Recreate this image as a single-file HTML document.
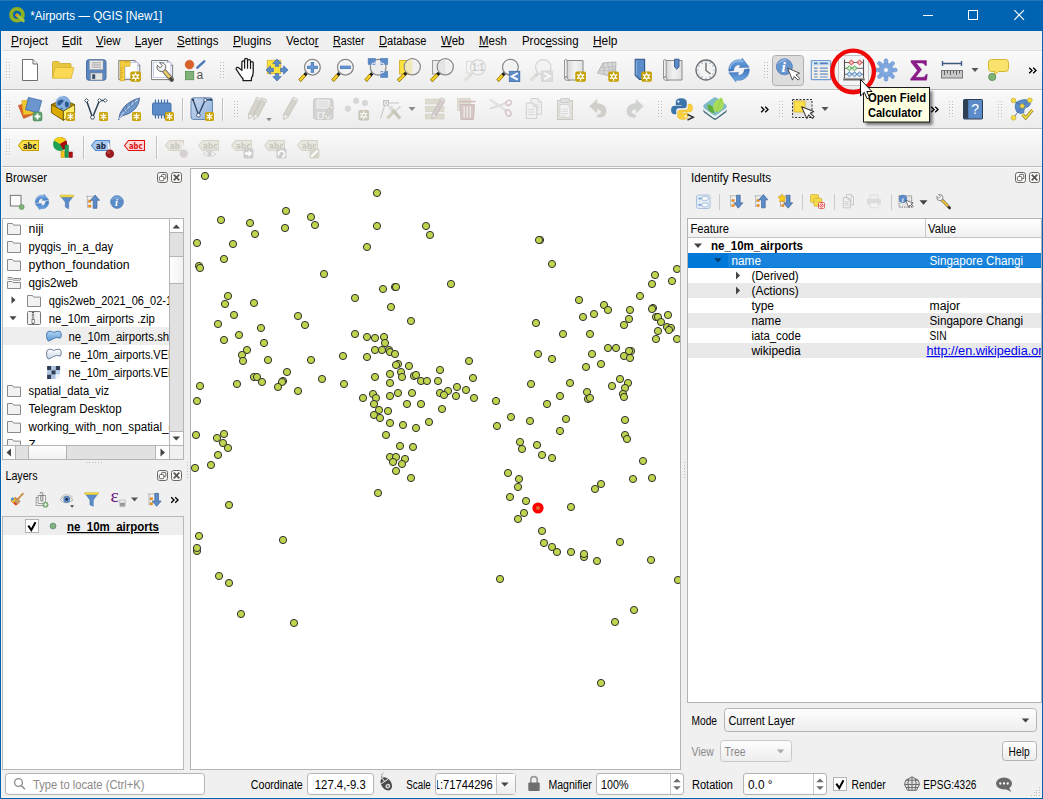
<!DOCTYPE html>
<html><head><meta charset="utf-8"><title>*Airports — QGIS [New1]</title>
<style>
html,body{margin:0;padding:0;background:#f0f0f0;overflow:hidden}
body{width:1043px;height:799px;font-family:"Liberation Sans",sans-serif}
svg{display:block;font-family:"Liberation Sans",sans-serif}
text{white-space:pre}
</style></head><body>
<svg width="1043" height="799" viewBox="0 0 1043 799">
<rect x="0" y="0" width="1043" height="799" fill="#f0f0f0" />
<rect x="0" y="0" width="1043" height="31" fill="#0063b1" />
<circle cx="17" cy="14.7" r="5.9" fill="none" stroke="#8fb023" stroke-width="3.8"/><path d="M17 15 L23.2 20.6" stroke="#a4c639" stroke-width="3.2" stroke-linecap="round"/><circle cx="16.8" cy="15" r="1.5" fill="#f58a1f"/>
<text x="30.2" y="20" font-size="12" fill="#fff" textLength="132" lengthAdjust="spacingAndGlyphs" >*Airports — QGIS [New1]</text>
<rect x="923" y="15" width="10" height="1" fill="#fff"/>
<rect x="968.5" y="10.5" width="9" height="9" fill="none" stroke="#fff" stroke-width="1" />
<rect x="0" y="0" width="1043" height="1" fill="#2474ba"/>
<path d="M1014.3 10.1 L1024 19.8 M1024 10.1 L1014.3 19.8" stroke="#fff" stroke-width="1.1" fill="none"/>
<rect x="1" y="31" width="1041" height="20" fill="#f0f0f0" />
<rect x="1" y="50" width="1041" height="1" fill="#dedede"/>
<text x="11" y="45" font-size="12" fill="#000" textLength="37" lengthAdjust="spacingAndGlyphs" ><tspan text-decoration="underline">P</tspan>roject</text>
<text x="62" y="45" font-size="12" fill="#000" textLength="20" lengthAdjust="spacingAndGlyphs" ><tspan text-decoration="underline">E</tspan>dit</text>
<text x="96" y="45" font-size="12" fill="#000" textLength="24.5" lengthAdjust="spacingAndGlyphs" ><tspan text-decoration="underline">V</tspan>iew</text>
<text x="135" y="45" font-size="12" fill="#000" textLength="28" lengthAdjust="spacingAndGlyphs" ><tspan text-decoration="underline">L</tspan>ayer</text>
<text x="177" y="45" font-size="12" fill="#000" textLength="41.5" lengthAdjust="spacingAndGlyphs" ><tspan text-decoration="underline">S</tspan>ettings</text>
<text x="233" y="45" font-size="12" fill="#000" textLength="38.5" lengthAdjust="spacingAndGlyphs" ><tspan text-decoration="underline">P</tspan>lugins</text>
<text x="286" y="45" font-size="12" fill="#000" textLength="32.5" lengthAdjust="spacingAndGlyphs" >Vecto<tspan text-decoration="underline">r</tspan></text>
<text x="333" y="45" font-size="12" fill="#000" textLength="31.5" lengthAdjust="spacingAndGlyphs" ><tspan text-decoration="underline">R</tspan>aster</text>
<text x="379" y="45" font-size="12" fill="#000" textLength="47.5" lengthAdjust="spacingAndGlyphs" ><tspan text-decoration="underline">D</tspan>atabase</text>
<text x="441" y="45" font-size="12" fill="#000" textLength="23.5" lengthAdjust="spacingAndGlyphs" ><tspan text-decoration="underline">W</tspan>eb</text>
<text x="479" y="45" font-size="12" fill="#000" textLength="28" lengthAdjust="spacingAndGlyphs" ><tspan text-decoration="underline">M</tspan>esh</text>
<text x="522" y="45" font-size="12" fill="#000" textLength="56.5" lengthAdjust="spacingAndGlyphs" >Proc<tspan text-decoration="underline">e</tspan>ssing</text>
<text x="593" y="45" font-size="12" fill="#000" textLength="24.5" lengthAdjust="spacingAndGlyphs" ><tspan text-decoration="underline">H</tspan>elp</text>
<defs><linearGradient id="tbg" x1="0" y1="0" x2="0" y2="1"><stop offset="0" stop-color="#fafafa"/><stop offset="1" stop-color="#ececec"/></linearGradient></defs>
<rect x="1" y="51" width="1041" height="38" fill="url(#tbg)"/>
<rect x="1" y="89" width="1041" height="1" fill="#bcbcbc"/>
<rect x="1" y="51" width="1041" height="1" fill="#fbfbfb"/>
<rect x="1" y="90" width="1041" height="38" fill="url(#tbg)"/>
<rect x="1" y="128" width="1041" height="1" fill="#bcbcbc"/>
<rect x="1" y="90" width="1041" height="1" fill="#ffffff"/>
<rect x="1" y="129" width="1041" height="37" fill="url(#tbg)"/>
<rect x="1" y="166" width="1041" height="1" fill="#bcbcbc"/>
<rect x="1" y="129" width="1041" height="1" fill="#ffffff"/>
<rect x="1" y="167" width="1041" height="1" fill="#fafafa"/>
<defs><linearGradient id="scr" x1="0" y1="0" x2="1" y2="0"><stop offset="0" stop-color="#d4d4d4"/><stop offset="0.5" stop-color="#f2f2f2"/><stop offset="1" stop-color="#e0e0e0"/></linearGradient><linearGradient id="vl" x1="0" y1="0" x2="1" y2="1"><stop offset="0" stop-color="#c9d8ee"/><stop offset="1" stop-color="#8fb0db"/></linearGradient></defs>
<rect x="6" y="62" width="1" height="1" fill="#bcbcbc"/><rect x="9" y="62" width="1" height="1" fill="#bcbcbc"/><rect x="7" y="63" width="1" height="1" fill="#fff" opacity="0.7"/><rect x="10" y="63" width="1" height="1" fill="#fff" opacity="0.7"/><rect x="6" y="65" width="1" height="1" fill="#bcbcbc"/><rect x="9" y="65" width="1" height="1" fill="#bcbcbc"/><rect x="7" y="66" width="1" height="1" fill="#fff" opacity="0.7"/><rect x="10" y="66" width="1" height="1" fill="#fff" opacity="0.7"/><rect x="6" y="68" width="1" height="1" fill="#bcbcbc"/><rect x="9" y="68" width="1" height="1" fill="#bcbcbc"/><rect x="7" y="69" width="1" height="1" fill="#fff" opacity="0.7"/><rect x="10" y="69" width="1" height="1" fill="#fff" opacity="0.7"/><rect x="6" y="71" width="1" height="1" fill="#bcbcbc"/><rect x="9" y="71" width="1" height="1" fill="#bcbcbc"/><rect x="7" y="72" width="1" height="1" fill="#fff" opacity="0.7"/><rect x="10" y="72" width="1" height="1" fill="#fff" opacity="0.7"/><rect x="6" y="74" width="1" height="1" fill="#bcbcbc"/><rect x="9" y="74" width="1" height="1" fill="#bcbcbc"/><rect x="7" y="75" width="1" height="1" fill="#fff" opacity="0.7"/><rect x="10" y="75" width="1" height="1" fill="#fff" opacity="0.7"/><rect x="6" y="77" width="1" height="1" fill="#bcbcbc"/><rect x="9" y="77" width="1" height="1" fill="#bcbcbc"/><rect x="7" y="78" width="1" height="1" fill="#fff" opacity="0.7"/><rect x="10" y="78" width="1" height="1" fill="#fff" opacity="0.7"/>
<g transform="translate(18.0 58.0)"><path d="M4.5 1.5 H15 L19.5 6 V22.5 H4.5 Z" fill="#fff" stroke="#6e6e6e"/><path d="M15 1.5 V6 H19.5" fill="#eee" stroke="#6e6e6e"/></g>
<g transform="translate(51.0 58.0)"><path d="M1.5 4.5 Q1.5 3.5 2.5 3.5 H7.5 L9.5 5.5 H19 Q20 5.5 20 6.5 V19.5 H1.5 Z" fill="#e9c63f" stroke="#c9a62a" stroke-width="0.8"/><path d="M4.2 9.5 H22.8 L20.2 20.3 H1.6 Z" fill="#fcd954" stroke="#d9b534" stroke-width="0.8"/></g>
<g transform="translate(84.0 58.0)"><rect x="2.5" y="1.7" width="19.5" height="20.5" rx="2.3" fill="#5b86c0" stroke="#4a72a8"/><rect x="5.5" y="2.5" width="13.5" height="9" fill="#efefef" stroke="#9a9a9a" stroke-width="0.6"/><path d="M7.5 4.8 H17 M7.5 7 H17 M7.5 9.2 H17" stroke="#777" stroke-width="0.7"/><rect x="6.5" y="15" width="12" height="7" fill="#e4e4e4" stroke="#888" stroke-width="0.5"/><rect x="8.2" y="16.3" width="3" height="4.6" fill="#3a506e"/></g>
<g transform="translate(117.0 58.0)"><path d="M1.8 2.5 H18 L22.8 7.3 V21.6 H1.8 Z" fill="#fff" stroke="#7a7a7a"/><path d="M18 2.5 V7.3 H22.8" fill="#f0f0f0" stroke="#7a7a7a"/><rect x="8" y="4.5" width="12.8" height="15.5" fill="#fff" stroke="#b4c4ea" stroke-width="0.8"/><path d="M3.2 2.9 H13 V8.2 H7.5 V22.7 H3.2 Z" fill="#f5cf3e" stroke="#d4a92a" stroke-width="0.8"/><path d="M3.6 10 h2 M3.6 12.3 h1.3 M3.6 14.6 h2 M3.6 16.9 h1.3 M3.6 19.2 h2 M8.5 3.3 v1.6 M10.8 3.3 v1.2" stroke="#b38d14" stroke-width="0.7"/><rect x="13.3" y="13.4" width="10.6" height="10.4" rx="1.8" fill="#c4a000"/><g stroke="#fff" stroke-width="1.4" stroke-linecap="round"><path d="M18.6 15 V22.2 M15.5 16.8 L21.7 20.4 M21.7 16.8 L15.5 20.4"/></g><circle cx="18.6" cy="18.6" r="1.9" fill="#c4a000" stroke="#fff" stroke-width="1.2"/></g>
<g transform="translate(150.0 58.0)"><path d="M1.6 2.5 H17.8 L22.6 7.3 V21.6 H1.6 Z" fill="#fff" stroke="#7a7a7a"/><path d="M17.8 2.5 V7.3 H22.6" fill="#f0f0f0" stroke="#7a7a7a"/><rect x="3.4" y="4.3" width="17.4" height="15.3" fill="#fff" stroke="#b4c4ea" stroke-width="0.8"/><path d="M14.6 13.6 L21.6 21.6" stroke="#5a5a5a" stroke-width="4.6" stroke-linecap="round"/><path d="M14.6 13.6 L21.6 21.6" stroke="#e9c96e" stroke-width="3" stroke-linecap="round"/><path d="M20.6 20.5 L21.9 21.9" stroke="#444" stroke-width="3" stroke-linecap="round"/><circle cx="11.4" cy="9.1" r="4.4" fill="#f2f2f2" stroke="#555" stroke-width="0.9"/><path d="M11.2 8.9 L7.2 4.9" stroke="#fff" stroke-width="3.4"/><path d="M12.3 7.6 L9.2 4.5 M10 9.9 L6.9 6.8" stroke="#555" stroke-width="0.9"/><path d="M12.3 7.6 L10 9.9" stroke="#555" stroke-width="0.9"/></g>
<g transform="translate(183.0 58.0)"><circle cx="6.5" cy="6.6" r="4.4" fill="#d9622b" stroke="#c05520" stroke-width="0.5"/><path d="M14.4 9.6 L21.2 3.4" stroke="#4f7ab8" stroke-width="2.6" stroke-linecap="round"/><rect x="2.5" y="13.5" width="8.2" height="8.2" fill="#7fb37a" stroke="#5f9458" stroke-width="0.9"/><text x="13.6" y="20.7" font-size="12" fill="#555">a</text></g>
<rect x="220" y="62" width="1" height="1" fill="#bcbcbc"/><rect x="223" y="62" width="1" height="1" fill="#bcbcbc"/><rect x="221" y="63" width="1" height="1" fill="#fff" opacity="0.7"/><rect x="224" y="63" width="1" height="1" fill="#fff" opacity="0.7"/><rect x="220" y="65" width="1" height="1" fill="#bcbcbc"/><rect x="223" y="65" width="1" height="1" fill="#bcbcbc"/><rect x="221" y="66" width="1" height="1" fill="#fff" opacity="0.7"/><rect x="224" y="66" width="1" height="1" fill="#fff" opacity="0.7"/><rect x="220" y="68" width="1" height="1" fill="#bcbcbc"/><rect x="223" y="68" width="1" height="1" fill="#bcbcbc"/><rect x="221" y="69" width="1" height="1" fill="#fff" opacity="0.7"/><rect x="224" y="69" width="1" height="1" fill="#fff" opacity="0.7"/><rect x="220" y="71" width="1" height="1" fill="#bcbcbc"/><rect x="223" y="71" width="1" height="1" fill="#bcbcbc"/><rect x="221" y="72" width="1" height="1" fill="#fff" opacity="0.7"/><rect x="224" y="72" width="1" height="1" fill="#fff" opacity="0.7"/><rect x="220" y="74" width="1" height="1" fill="#bcbcbc"/><rect x="223" y="74" width="1" height="1" fill="#bcbcbc"/><rect x="221" y="75" width="1" height="1" fill="#fff" opacity="0.7"/><rect x="224" y="75" width="1" height="1" fill="#fff" opacity="0.7"/><rect x="220" y="77" width="1" height="1" fill="#bcbcbc"/><rect x="223" y="77" width="1" height="1" fill="#bcbcbc"/><rect x="221" y="78" width="1" height="1" fill="#fff" opacity="0.7"/><rect x="224" y="78" width="1" height="1" fill="#fff" opacity="0.7"/>
<g transform="translate(232.0 58.0)"><g transform="translate(1.23 -1.61) scale(1.136 1.085)"><path d="M7.6 12.9 V5.6 Q7.6 4.2 8.8 4.2 Q10 4.2 10 5.6 V3.3 Q10 1.9 11.3 1.9 Q12.6 1.9 12.6 3.3 V4.3 Q12.6 3 13.9 3 Q15.2 3 15.2 4.4 V6 Q15.2 4.9 16.4 4.9 Q17.6 4.9 17.6 6.2 V14.5 Q17.6 18 16 20 V22.3 H8.6 V20.6 Q6.5 18.3 4.4 14.6 Q3.2 12.6 2.6 11.7 Q2.2 10.6 3.2 10.2 Q4.3 9.9 5.3 10.9 Z" fill="#fff" stroke="#1a1a1a" stroke-width="1.15" stroke-linejoin="round"/><path d="M10 5.6 V11.5 M12.6 4.3 V11.3 M15.2 6 V11.6" stroke="#1a1a1a" stroke-width="1.05" fill="none"/></g></g>
<g transform="translate(265.0 58.0)"><rect x="2.3" y="2.3" width="13.4" height="13.4" fill="#fbe23c" stroke="#d9b534" stroke-width="0.9"/><g fill="#5b8cc9" stroke="#3f6ea8" stroke-width="0.7" stroke-linejoin="round"><path d="M12 1 L16.2 5.4 H13.7 V8.4 H10.3 V5.4 H7.8 Z"/><path d="M12 23 L16.2 18.6 H13.7 V15.6 H10.3 V18.6 H7.8 Z"/><path d="M1 12 L5.4 7.8 V10.3 H8.4 V13.7 H5.4 V16.2 Z"/><path d="M23 12 L18.6 7.8 V10.3 H15.6 V13.7 H18.6 V16.2 Z"/></g></g>
<g transform="translate(298.0 58.0)"><g opacity="1"><path d="M8.46 15.14 L1.7 22.7" stroke="#1a1a1a" stroke-width="3.2" stroke-linecap="butt"/><path d="M6.56 17.04 L1.7 22.7" stroke="#b89400" stroke-width="3.4"/><path d="M6.36 17.24 L2.0 22.4" stroke="#f7cf2e" stroke-width="2.1"/><circle cx="14.4" cy="9.2" r="7.9" fill="#f2f2f2" stroke="#858585" stroke-width="1.2"/><path d="M8.10 8.20 A6.40 6.40 0 0 1 20.70 8.20" stroke="#fff" stroke-width="1" fill="none" opacity="0.7"/><path d="M14.4 4 V14.7 M9 9.35 H19.8" stroke="#4a78b5" stroke-width="3.3"/><path d="M14.4 4.6 V14.1 M9.6 9.35 H19.2" stroke="#6596d2" stroke-width="2.1"/></g></g>
<g transform="translate(331.0 58.0)"><g opacity="1"><path d="M8.46 15.14 L1.7 22.7" stroke="#1a1a1a" stroke-width="3.2" stroke-linecap="butt"/><path d="M6.56 17.04 L1.7 22.7" stroke="#b89400" stroke-width="3.4"/><path d="M6.36 17.24 L2.0 22.4" stroke="#f7cf2e" stroke-width="2.1"/><circle cx="14.4" cy="9.2" r="7.9" fill="#f2f2f2" stroke="#858585" stroke-width="1.2"/><path d="M8.10 8.20 A6.40 6.40 0 0 1 20.70 8.20" stroke="#fff" stroke-width="1" fill="none" opacity="0.7"/><path d="M9 9.35 H19.8" stroke="#4a78b5" stroke-width="3.3"/><path d="M9.6 9.35 H19.2" stroke="#6596d2" stroke-width="2.1"/></g></g>
<g transform="translate(364.0 58.0)"><g opacity="1"><path d="M8.26 15.24 L1.7 22.7" stroke="#1a1a1a" stroke-width="3.2" stroke-linecap="butt"/><path d="M6.36 17.14 L1.7 22.7" stroke="#b89400" stroke-width="3.4"/><path d="M6.16 17.34 L2.0 22.4" stroke="#f7cf2e" stroke-width="2.1"/><circle cx="14.2" cy="9.3" r="7.9" fill="#ececec" stroke="#858585" stroke-width="1.2"/><path d="M7.90 8.30 A6.40 6.40 0 0 1 20.50 8.30" stroke="#fff" stroke-width="1" fill="none" opacity="0.7"/><g transform="translate(4.1 0.3) rotate(0 3.6 3.1)"><rect x="0" y="0" width="7.2" height="6.2" fill="#5b8cc9" stroke="#4a78b5" stroke-width="0.5"/><path d="M7.4 2.6 L4.4 6.4 L7.4 6.4 Z M2.8 6.4 L4.6 4.2 L7.4 6.4 Z" fill="#ececec"/></g><g transform="translate(27.9 0) scale(-1 1)"><g transform="translate(4.1 0.3) rotate(0 3.6 3.1)"><rect x="0" y="0" width="7.2" height="6.2" fill="#5b8cc9" stroke="#4a78b5" stroke-width="0.5"/><path d="M7.4 2.6 L4.4 6.4 L7.4 6.4 Z M2.8 6.4 L4.6 4.2 L7.4 6.4 Z" fill="#ececec"/></g></g><g transform="translate(27.9 19.8) scale(-1 -1)"><g transform="translate(4.1 0.3) rotate(0 3.6 3.1)"><rect x="0" y="0" width="7.2" height="6.2" fill="#5b8cc9" stroke="#4a78b5" stroke-width="0.5"/><path d="M7.4 2.6 L4.4 6.4 L7.4 6.4 Z M2.8 6.4 L4.6 4.2 L7.4 6.4 Z" fill="#ececec"/></g></g></g></g>
<g transform="translate(397.0 58.0)"><rect x="2.5" y="2.5" width="9.5" height="13.5" fill="#fbe23c" stroke="#d9b534"/><g opacity="1"><path d="M9.22 14.88 L1.2 22.8" stroke="#1a1a1a" stroke-width="3.2" stroke-linecap="butt"/><path d="M7.32 16.78 L1.2 22.8" stroke="#b89400" stroke-width="3.4"/><path d="M7.12 16.98 L1.5 22.5" stroke="#f7cf2e" stroke-width="2.1"/><circle cx="15.3" cy="8.8" r="8.1" fill="#f0f0f0" stroke="#858585" stroke-width="1.2"/><path d="M8.80 7.80 A6.60 6.60 0 0 1 21.80 7.80" stroke="#fff" stroke-width="1" fill="none" opacity="0.7"/><path d="M15.3 1.3 A7.5 7.5 0 0 0 15.3 16.3 Z" fill="#efe7b4" opacity="0.9"/></g></g>
<g transform="translate(430.0 58.0)"><rect x="2.5" y="2.5" width="9.5" height="13.5" fill="#ececec" stroke="#9a9a9a"/><g opacity="1"><path d="M9.22 14.88 L1.2 22.8" stroke="#1a1a1a" stroke-width="3.2" stroke-linecap="butt"/><path d="M7.32 16.78 L1.2 22.8" stroke="#b89400" stroke-width="3.4"/><path d="M7.12 16.98 L1.5 22.5" stroke="#f7cf2e" stroke-width="2.1"/><circle cx="15.3" cy="8.8" r="8.1" fill="#f0f0f0" stroke="#858585" stroke-width="1.2"/><path d="M8.80 7.80 A6.60 6.60 0 0 1 21.80 7.80" stroke="#fff" stroke-width="1" fill="none" opacity="0.7"/><path d="M15.3 1.3 A7.5 7.5 0 0 0 15.3 16.3 Z" fill="#e2e2e2" opacity="0.85"/></g></g>
<g transform="translate(463.0 58.0)"><g opacity="0.55"><rect x="3.5" y="3.5" width="9" height="11.5" fill="#f4f4f4" stroke="#c6c6c6"/><path d="M8.6 15.9 L2 22.4" stroke="#c9c9c9" stroke-width="3.2"/><path d="M6.6 17.9 L2.3 22.1" stroke="#dcdccf" stroke-width="2.4"/><circle cx="15" cy="9.3" r="7.5" fill="#f3f3f3" stroke="#bdbdbd" stroke-width="1.2"/></g><text x="9.3" y="13.4" font-size="11" font-weight="bold" fill="#c6c6c6" textLength="11.6" lengthAdjust="spacingAndGlyphs">1:1</text></g>
<g transform="translate(496.0 58.0)"><g opacity="1"><path d="M8.46 15.14 L1.7 22.7" stroke="#1a1a1a" stroke-width="3.2" stroke-linecap="butt"/><path d="M6.56 17.04 L1.7 22.7" stroke="#b89400" stroke-width="3.4"/><path d="M6.36 17.24 L2.0 22.4" stroke="#f7cf2e" stroke-width="2.1"/><circle cx="14.4" cy="9.2" r="7.9" fill="#f2f2f2" stroke="#858585" stroke-width="1.2"/><path d="M8.10 8.20 A6.40 6.40 0 0 1 20.70 8.20" stroke="#fff" stroke-width="1" fill="none" opacity="0.7"/></g><rect x="13.3" y="13.3" width="10.5" height="10.3" fill="#5b8cc9" stroke="#3f6ea8" stroke-width="0.8"/><path d="M21.8 15.2 L15.6 18.4 L21.8 21.6" stroke="#fff" stroke-width="1.9" fill="none"/></g>
<g transform="translate(529.0 58.0)"><g opacity="0.6"><path d="M8.6 15.9 L2 22.4" stroke="#bdbdbd" stroke-width="3.2"/><path d="M6.6 17.9 L2.3 22.1" stroke="#dcdccf" stroke-width="2.4"/><circle cx="14.3" cy="9.3" r="7.7" fill="#f3f3f3" stroke="#bdbdbd" stroke-width="1.2"/><rect x="12.5" y="13" width="10.8" height="10.4" fill="#cfcfcf" stroke="#bdbdbd" stroke-width="0.8"/><path d="M15 15 L21 18.2 L15 21.4" stroke="#fff" stroke-width="1.9" fill="none"/></g></g>
<g transform="translate(562.0 58.0)"><path d="M4.5 2.5 H21 V22 H7.5 Q4.5 22 4.5 19 Z" fill="url(#scr)" stroke="#8a8a8a"/><path d="M2.5 3 Q2.5 1.5 3.8 1.5 Q5.2 1.5 5.2 3 V18.5 Q3 18.2 2.5 20.5 Z" fill="#f0f0f0" stroke="#8a8a8a" stroke-width="0.9"/><path d="M2.5 20.5 Q2.8 22.5 5.5 22.5 H7.5 Q5 21.5 5.2 18.6 Q3 18.3 2.5 20.5 Z" fill="#dcdcdc" stroke="#8a8a8a" stroke-width="0.8"/><rect x="13.3" y="13.4" width="10.6" height="10.4" rx="1.8" fill="#c4a000"/><g stroke="#fff" stroke-width="1.4" stroke-linecap="round"><path d="M18.6 15 V22.2 M15.5 16.8 L21.7 20.4 M21.7 16.8 L15.5 20.4"/></g><circle cx="18.6" cy="18.6" r="1.9" fill="#c4a000" stroke="#fff" stroke-width="1.2"/></g>
<g transform="translate(595.0 58.0)"><path d="M8 5 L21 4 L20.5 13.5 L15 18 L2.5 15 Z" fill="#d8d8d8" stroke="#a9a9a9" stroke-width="0.8"/><path d="M8 5 Q10 10 9 16.5 M12.5 4.7 Q14.5 10 14 17.5 M17 4.3 Q18 9 18 15.6 M5.5 10 Q13 9 20.8 8.5 M4 12.8 Q12 13 20.6 11.5" stroke="#b5b5b5" stroke-width="0.7" fill="none"/><rect x="13.3" y="13.4" width="10.6" height="10.4" rx="1.8" fill="#c4a000"/><g stroke="#fff" stroke-width="1.4" stroke-linecap="round"><path d="M18.6 15 V22.2 M15.5 16.8 L21.7 20.4 M21.7 16.8 L15.5 20.4"/></g><circle cx="18.6" cy="18.6" r="1.9" fill="#c4a000" stroke="#fff" stroke-width="1.2"/></g>
<g transform="translate(628.0 58.0)"><path d="M7.2 1.3 H16.6 V21.5 H11.7 L7.2 17.3 Z" fill="#5b8cc9" stroke="#2f5588" stroke-width="1.1" stroke-linejoin="round"/><path d="M8.4 2.4 V16.8" stroke="#8fb4e2" stroke-width="1"/><rect x="13.3" y="13.4" width="10.6" height="10.4" rx="1.8" fill="#c4a000"/><g stroke="#fff" stroke-width="1.4" stroke-linecap="round"><path d="M18.6 15 V22.2 M15.5 16.8 L21.7 20.4 M21.7 16.8 L15.5 20.4"/></g><circle cx="18.6" cy="18.6" r="1.9" fill="#c4a000" stroke="#fff" stroke-width="1.2"/></g>
<g transform="translate(661.0 58.0)"><path d="M4.5 2.5 H21 V22 H7.5 Q4.5 22 4.5 19 Z" fill="url(#scr)" stroke="#8a8a8a"/><path d="M2.5 3 Q2.5 1.5 3.8 1.5 Q5.2 1.5 5.2 3 V18.5 Q3 18.2 2.5 20.5 Z" fill="#f0f0f0" stroke="#8a8a8a" stroke-width="0.9"/><path d="M2.5 20.5 Q2.8 22.5 5.5 22.5 H7.5 Q5 21.5 5.2 18.6 Q3 18.3 2.5 20.5 Z" fill="#dcdcdc" stroke="#8a8a8a" stroke-width="0.8"/><path d="M13.5 1.2 H18 V9 L15.75 11.2 L13.5 9 Z" fill="#5b8cc9" stroke="#2f5588" stroke-width="0.9"/></g>
<g transform="translate(694.0 58.0)"><circle cx="12" cy="12" r="10" fill="#f3f3f3" stroke="#6e6e6e" stroke-width="1.3"/><circle cx="12.00" cy="4.00" r="0.6" fill="#4f7ab8"/><circle cx="16.00" cy="5.07" r="0.6" fill="#4f7ab8"/><circle cx="18.93" cy="8.00" r="0.6" fill="#4f7ab8"/><circle cx="20.00" cy="12.00" r="0.6" fill="#4f7ab8"/><circle cx="18.93" cy="16.00" r="0.6" fill="#4f7ab8"/><circle cx="16.00" cy="18.93" r="0.6" fill="#4f7ab8"/><circle cx="12.00" cy="20.00" r="0.6" fill="#4f7ab8"/><circle cx="8.00" cy="18.93" r="0.6" fill="#4f7ab8"/><circle cx="5.07" cy="16.00" r="0.6" fill="#4f7ab8"/><circle cx="4.00" cy="12.00" r="0.6" fill="#4f7ab8"/><circle cx="5.07" cy="8.00" r="0.6" fill="#4f7ab8"/><circle cx="8.00" cy="5.07" r="0.6" fill="#4f7ab8"/><path d="M12 5 V12.5 L16.5 16" stroke="#6e6e6e" stroke-width="1.4" fill="none"/></g>
<g transform="translate(727.0 58.0)"><defs><linearGradient id="rfg" x1="0" y1="0" x2="0" y2="1"><stop offset="0" stop-color="#74abe8"/><stop offset="1" stop-color="#3a74bd"/></linearGradient></defs><path d="M1.8 13.2 A10.3 10.3 0 0 1 14.67 2.05 L15.18 0.12 L22.2 9.2 L12.4 9.6 L13.37 6.88 A5.3 5.3 0 0 0 6.75 12.6 Z" fill="url(#rfg)" stroke="#3a6fb0" stroke-width="0.5" stroke-linejoin="round"/><path d="M1.8 13.2 A10.3 10.3 0 0 1 14.67 2.05 L15.18 0.12 L22.2 9.2 L12.4 9.6 L13.37 6.88 A5.3 5.3 0 0 0 6.75 12.6 Z" fill="url(#rfg)" stroke="#3a6fb0" stroke-width="0.5" stroke-linejoin="round" transform="rotate(180 12 12)"/><path d="M2.8 11 A9.3 9.3 0 0 1 16 3.7" stroke="#b4d4f4" stroke-width="0.9" fill="none"/></g>
<rect x="764" y="62" width="1" height="1" fill="#bcbcbc"/><rect x="767" y="62" width="1" height="1" fill="#bcbcbc"/><rect x="765" y="63" width="1" height="1" fill="#fff" opacity="0.7"/><rect x="768" y="63" width="1" height="1" fill="#fff" opacity="0.7"/><rect x="764" y="65" width="1" height="1" fill="#bcbcbc"/><rect x="767" y="65" width="1" height="1" fill="#bcbcbc"/><rect x="765" y="66" width="1" height="1" fill="#fff" opacity="0.7"/><rect x="768" y="66" width="1" height="1" fill="#fff" opacity="0.7"/><rect x="764" y="68" width="1" height="1" fill="#bcbcbc"/><rect x="767" y="68" width="1" height="1" fill="#bcbcbc"/><rect x="765" y="69" width="1" height="1" fill="#fff" opacity="0.7"/><rect x="768" y="69" width="1" height="1" fill="#fff" opacity="0.7"/><rect x="764" y="71" width="1" height="1" fill="#bcbcbc"/><rect x="767" y="71" width="1" height="1" fill="#bcbcbc"/><rect x="765" y="72" width="1" height="1" fill="#fff" opacity="0.7"/><rect x="768" y="72" width="1" height="1" fill="#fff" opacity="0.7"/><rect x="764" y="74" width="1" height="1" fill="#bcbcbc"/><rect x="767" y="74" width="1" height="1" fill="#bcbcbc"/><rect x="765" y="75" width="1" height="1" fill="#fff" opacity="0.7"/><rect x="768" y="75" width="1" height="1" fill="#fff" opacity="0.7"/><rect x="764" y="77" width="1" height="1" fill="#bcbcbc"/><rect x="767" y="77" width="1" height="1" fill="#bcbcbc"/><rect x="765" y="78" width="1" height="1" fill="#fff" opacity="0.7"/><rect x="768" y="78" width="1" height="1" fill="#fff" opacity="0.7"/>
<rect x="772.5" y="55.5" width="31" height="30" fill="#dddddd" stroke="#b0b0b0" stroke-width="1" rx="3" />
<g transform="translate(775.0 58.0)"><circle cx="9.4" cy="8.8" r="8" fill="#6895cf" stroke="#4f7fb8" stroke-width="0.8"/><path d="M2.6 6.6 A7.2 7.2 0 0 1 13 2.2 Q6 3 2.6 6.6 Z" fill="#a9c6ea" opacity="0.7"/><text x="6.4" y="14.4" font-size="15.5" font-weight="bold" font-style="italic" font-family="Liberation Serif,serif" fill="#fff">i</text><g transform="translate(12.6 10.1) scale(0.98)"><path d="M0 0 L0 13.2 L3.1 10.4 L5.4 15.4 L7.6 14.4 L5.3 9.6 L9.4 9.4 Z" fill="#fff" stroke="#444" stroke-width="0.85" stroke-linejoin="round" transform="rotate(-22)"/></g></g>
<g transform="translate(808.0 58.0)"><rect x="3.3" y="2.5" width="19.4" height="19.2" rx="1" fill="#f6f0e8" stroke="#6f9bd1" stroke-width="1.2"/><rect x="3.9" y="3.1" width="18.2" height="4.6" fill="#cfe2f3"/><path d="M6 5.4 H9.6 M11.8 5.4 H19.8" stroke="#4f7fc0" stroke-width="1.9"/><path d="M6 10.2 H9.6 M11.8 10.2 H19.8" stroke="#5b8cc9" stroke-width="1.2"/><path d="M6 13.1 H9.6 M11.8 13.1 H19.8" stroke="#5b8cc9" stroke-width="1.2"/><path d="M6 16.1 H9.6 M11.8 16.1 H19.8" stroke="#5b8cc9" stroke-width="1.2"/><path d="M6 19 H9.6 M11.8 19 H19.8" stroke="#5b8cc9" stroke-width="1.2"/></g>
<rect x="838.5" y="55.5" width="30" height="30" fill="#f6f6f6" stroke="#c4c4c4" stroke-width="1" rx="2.5" />
<g transform="translate(841.0 58.0)"><path d="M3.5 1.5 V20.5 M22.5 1.5 V20.5" stroke="#555" stroke-width="1.1"/><path d="M2.3 21.5 H23.7" stroke="#6a6a6a" stroke-width="2"/><path d="M2.3 20.3 H23.7" stroke="#9a9a9a" stroke-width="0.6"/><path d="M3.5 4.5 H22.5" stroke="#555" stroke-width="0.9"/><path d="M7.7 4.5 L10.4 2.0 L13.100000000000001 4.5 L10.4 7.0 Z" fill="#ec8a8a" stroke="#c23a3a" stroke-width="0.8"/><circle cx="10.4" cy="4.5" r="0.9" fill="#fff" opacity="0.8"/><path d="M15.900000000000002 4.5 L18.6 2.0 L21.3 4.5 L18.6 7.0 Z" fill="#ec8a8a" stroke="#c23a3a" stroke-width="0.8"/><circle cx="18.6" cy="4.5" r="0.9" fill="#fff" opacity="0.8"/><path d="M3.5 10.3 H22.5" stroke="#555" stroke-width="0.9"/><path d="M5.6000000000000005 10.3 L8.3 7.800000000000001 L11.0 10.3 L8.3 12.8 Z" fill="#9fd69f" stroke="#55a555" stroke-width="0.8"/><circle cx="8.3" cy="10.3" r="0.9" fill="#fff" opacity="0.8"/><path d="M10.8 10.3 L13.5 7.800000000000001 L16.2 10.3 L13.5 12.8 Z" fill="#9fd69f" stroke="#55a555" stroke-width="0.8"/><circle cx="13.5" cy="10.3" r="0.9" fill="#fff" opacity="0.8"/><path d="M3.5 16.3 H22.5" stroke="#555" stroke-width="0.9"/><path d="M5.7 16.3 L8.4 13.8 L11.100000000000001 16.3 L8.4 18.8 Z" fill="#9cc0e6" stroke="#4f7fb8" stroke-width="0.8"/><circle cx="8.4" cy="16.3" r="0.9" fill="#fff" opacity="0.8"/><path d="M10.8 16.3 L13.5 13.8 L16.2 16.3 L13.5 18.8 Z" fill="#9cc0e6" stroke="#4f7fb8" stroke-width="0.8"/><circle cx="13.5" cy="16.3" r="0.9" fill="#fff" opacity="0.8"/><path d="M15.8 16.3 L18.5 13.8 L21.2 16.3 L18.5 18.8 Z" fill="#9cc0e6" stroke="#4f7fb8" stroke-width="0.8"/><circle cx="18.5" cy="16.3" r="0.9" fill="#fff" opacity="0.8"/></g>
<g transform="translate(874.0 58.0)"><g fill="#7fa8de" stroke="#5f8fcf" stroke-width="0.6"><rect x="10.2" y="0.8" width="3.6" height="7.5" rx="1.8" transform="rotate(0 12 12)"/><rect x="10.2" y="0.8" width="3.6" height="7.5" rx="1.8" transform="rotate(45 12 12)"/><rect x="10.2" y="0.8" width="3.6" height="7.5" rx="1.8" transform="rotate(90 12 12)"/><rect x="10.2" y="0.8" width="3.6" height="7.5" rx="1.8" transform="rotate(135 12 12)"/><rect x="10.2" y="0.8" width="3.6" height="7.5" rx="1.8" transform="rotate(180 12 12)"/><rect x="10.2" y="0.8" width="3.6" height="7.5" rx="1.8" transform="rotate(225 12 12)"/><rect x="10.2" y="0.8" width="3.6" height="7.5" rx="1.8" transform="rotate(270 12 12)"/><rect x="10.2" y="0.8" width="3.6" height="7.5" rx="1.8" transform="rotate(315 12 12)"/><circle cx="12" cy="12" r="6.8"/></g><circle cx="12" cy="12" r="6.5" fill="#7fa8de"/><circle cx="12" cy="12" r="2.5" fill="#f6f6f6" stroke="#5f8fcf" stroke-width="0.6"/></g>
<g transform="translate(907.0 58.0)"><path d="M4 2.5 H19.5 V7.5 H18 Q17.6 5 15 5 H9.2 L14.6 11.6 L8.6 19.3 H15.6 Q18.2 19.3 18.9 16.4 H20.4 L19.6 22.2 H3.6 V21 L10.4 12.4 L4 4.2 Z" fill="#8b1a8b" stroke="#7a127a" stroke-width="0.4"/></g>
<g transform="translate(940.0 58.0)"><path d="M2.5 5.5 H21.5 M2.5 3 V8 M21.5 3 V8" stroke="#3d5a80" stroke-width="1.4" fill="none"/><rect x="1.5" y="12.5" width="21" height="7.5" fill="#c9c9c9" stroke="#777" stroke-width="1"/><path d="M4.5 13 V17" stroke="#555" stroke-width="0.9"/><path d="M7.5 13 V15.5" stroke="#555" stroke-width="0.9"/><path d="M10.5 13 V17" stroke="#555" stroke-width="0.9"/><path d="M13.5 13 V15.5" stroke="#555" stroke-width="0.9"/><path d="M16.5 13 V17" stroke="#555" stroke-width="0.9"/><path d="M19.5 13 V15.5" stroke="#555" stroke-width="0.9"/></g>
<path d="M971.5 68.0 L978.5 68.0 L975 72.0 Z" fill="#555"/>
<g transform="translate(986.0 58.0)"><path d="M5.5 1.5 H19.5 Q22.5 1.5 22.5 4.5 V10.5 Q22.5 13.5 19.5 13.5 H12.5 L7.5 18 L9 13.5 H5.5 Q2.5 13.5 2.5 10.5 V4.5 Q2.5 1.5 5.5 1.5 Z" fill="#f9e36c" stroke="#d4b630" stroke-width="1"/><circle cx="6.2" cy="19" r="3.6" fill="#7fb37a" stroke="#5f9458" stroke-width="0.9"/></g>
<path d="M1029.2 67.8 l2.8 2.7 l-2.8 2.7 M1033.2 67.8 l2.8 2.7 l-2.8 2.7" stroke="#000" stroke-width="1.35" fill="none"/>
<rect x="6" y="101" width="1" height="1" fill="#bcbcbc"/><rect x="9" y="101" width="1" height="1" fill="#bcbcbc"/><rect x="7" y="102" width="1" height="1" fill="#fff" opacity="0.7"/><rect x="10" y="102" width="1" height="1" fill="#fff" opacity="0.7"/><rect x="6" y="104" width="1" height="1" fill="#bcbcbc"/><rect x="9" y="104" width="1" height="1" fill="#bcbcbc"/><rect x="7" y="105" width="1" height="1" fill="#fff" opacity="0.7"/><rect x="10" y="105" width="1" height="1" fill="#fff" opacity="0.7"/><rect x="6" y="107" width="1" height="1" fill="#bcbcbc"/><rect x="9" y="107" width="1" height="1" fill="#bcbcbc"/><rect x="7" y="108" width="1" height="1" fill="#fff" opacity="0.7"/><rect x="10" y="108" width="1" height="1" fill="#fff" opacity="0.7"/><rect x="6" y="110" width="1" height="1" fill="#bcbcbc"/><rect x="9" y="110" width="1" height="1" fill="#bcbcbc"/><rect x="7" y="111" width="1" height="1" fill="#fff" opacity="0.7"/><rect x="10" y="111" width="1" height="1" fill="#fff" opacity="0.7"/><rect x="6" y="113" width="1" height="1" fill="#bcbcbc"/><rect x="9" y="113" width="1" height="1" fill="#bcbcbc"/><rect x="7" y="114" width="1" height="1" fill="#fff" opacity="0.7"/><rect x="10" y="114" width="1" height="1" fill="#fff" opacity="0.7"/><rect x="6" y="116" width="1" height="1" fill="#bcbcbc"/><rect x="9" y="116" width="1" height="1" fill="#bcbcbc"/><rect x="7" y="117" width="1" height="1" fill="#fff" opacity="0.7"/><rect x="10" y="117" width="1" height="1" fill="#fff" opacity="0.7"/>
<g transform="translate(18.0 97.0)"><path d="M0.3 8.4 L11 5.5 L15.2 17.5 L5.6 21.4 Z" fill="#d9622b" stroke="#c05520" stroke-width="0.6" stroke-linejoin="round"/><path d="M3.7 3.8 L15 2.5 L16.5 16.5 L5.5 17.8 Z" fill="#f2c62c" stroke="#d4a92a" stroke-width="0.6" stroke-linejoin="round"/><path d="M10.4 0.4 L23.7 3.6 L20.4 15.7 L7.5 12.7 Z" fill="#6a95cd" stroke="#3f6ea8" stroke-width="0.8" stroke-linejoin="round"/><rect x="15" y="15" width="9" height="9" rx="1.6" fill="#5f9d6a" stroke="#4a8a55" stroke-width="0.5"/><path d="M19.5 16.6 V22.4 M16.6 19.5 H22.4" stroke="#fff" stroke-width="1.8"/></g>
<g transform="translate(51.0 97.0)"><path d="M0.4 7.5 L12 2.5 L23.6 7.5 L12.4 14.2 Z" fill="#b98a00" stroke="#5a4a00" stroke-width="0.8" stroke-linejoin="round"/><circle cx="12.1" cy="6.4" r="7.1" fill="#86b0df" stroke="#5f8fcb" stroke-width="0.6"/><path d="M7 4 Q9.5 1.5 12.6 3 Q12.8 5.5 10.6 6.6 Q9.4 9.4 6.6 8.2 Q5.6 6 7 4 Z M14 5 Q16.6 3.6 18 6.4 Q17.8 10.6 15 10.8 Q13.2 8.4 14 5 Z M9 11 Q11 10 12 12 Q10.5 13.2 9 11 Z" fill="#2f5a8f"/><path d="M4.5 4.5 A7.1 7.1 0 0 1 12 -0.6" stroke="#c4dcf4" stroke-width="1" fill="none" opacity="0.8"/><path d="M0.4 7.5 L12.4 14.2 V23.4 L0.4 15.8 Z" fill="#dbab00" stroke="#5a4a00" stroke-width="0.8" stroke-linejoin="round"/><path d="M12.4 14.2 L23.6 7.5 V15.8 L12.4 23.4 Z" fill="#fdf06a" stroke="#5a4a00" stroke-width="0.8" stroke-linejoin="round"/><rect x="15" y="15" width="9" height="9" rx="1.6" fill="#c9a50a"/><g stroke="#fff" stroke-width="1.35" stroke-linecap="round"><path d="M19.5 16.6 V22.4 M17 18 L22 21 M22 18 L17 21"/></g></g>
<g transform="translate(84.0 97.0)"><path d="M2.5 3.5 L8.5 20.5 L15.5 3.5 L21 3.5" stroke="#2e4057" stroke-width="1.5" fill="none" stroke-linejoin="round"/><g fill="#fff" stroke="#2e4057" stroke-width="0.9"><path d="M2.5 1.6 L4.4 3.5 L2.5 5.4 L0.6 3.5 Z"/><path d="M15.5 1.6 L17.4 3.5 L15.5 5.4 L13.6 3.5 Z"/><path d="M21.3 1.6 L23.2 3.5 L21.3 5.4 L19.4 3.5 Z"/><circle cx="8.5" cy="20.3" r="1.9"/></g><rect x="15" y="15" width="9" height="9" rx="1.6" fill="#c9a50a"/><g stroke="#fff" stroke-width="1.35" stroke-linecap="round"><path d="M19.5 16.6 V22.4 M17 18 L22 21 M22 18 L17 21"/></g></g>
<g transform="translate(117.0 97.0)"><path d="M1.5 23 Q2 15.5 7.5 9.5 Q13.5 3.2 22.5 1 Q22.5 6.5 18.5 11.5 Q13 17.5 5.5 18.8 Q3.2 20.2 1.5 23 Z" fill="#6f97c9" stroke="#3f5f8f" stroke-width="0.8" stroke-linejoin="round"/><path d="M1.8 22.3 Q8 12 21 2.3" stroke="#dfe9f6" stroke-width="0.9" fill="none"/><path d="M9 8.5 L10 13 M13 5.6 L14 10 M17 3.6 L17.6 7.6 M6 12 L8 15.5" stroke="#3f5f8f" stroke-width="0.6" fill="none"/><rect x="15" y="15" width="9" height="9" rx="1.6" fill="#c9a50a"/><g stroke="#fff" stroke-width="1.35" stroke-linecap="round"><path d="M19.5 16.6 V22.4 M17 18 L22 21 M22 18 L17 21"/></g></g>
<g transform="translate(150.0 97.0)"><rect x="2.5" y="6" width="18.5" height="12" rx="1.2" fill="#5b8cc9" stroke="#3f6ea8" stroke-width="0.9"/><path d="M5.5 2.5 V6 M5.5 18 V21.5" stroke="#3f6ea8" stroke-width="1.2"/><path d="M8.5 2.5 V6 M8.5 18 V21.5" stroke="#3f6ea8" stroke-width="1.2"/><path d="M11.5 2.5 V6 M11.5 18 V21.5" stroke="#3f6ea8" stroke-width="1.2"/><path d="M14.5 2.5 V6 M14.5 18 V21.5" stroke="#3f6ea8" stroke-width="1.2"/><path d="M17.5 2.5 V6 M17.5 18 V21.5" stroke="#3f6ea8" stroke-width="1.2"/><rect x="15" y="15" width="9" height="9" rx="1.6" fill="#c9a50a"/><g stroke="#fff" stroke-width="1.35" stroke-linecap="round"><path d="M19.5 16.6 V22.4 M17 18 L22 21 M22 18 L17 21"/></g></g>
<rect x="182" y="98" width="1" height="23" fill="#c2c2c2"/>
<rect x="183" y="98" width="1" height="23" fill="#fbfbfb"/>
<g transform="translate(190.0 97.0)"><rect x="1" y="0.8" width="21.5" height="21.7" rx="2.5" fill="url(#vl)" stroke="#5f7fa8" stroke-width="0.9"/><path d="M3 2.8 L8.5 18 L15.3 2.8 L21 2.8" stroke="#2e4a6e" stroke-width="1.4" fill="none"/><g fill="#fff" stroke="#2e4a6e" stroke-width="0.8"><circle cx="15.3" cy="3" r="1.6"/><circle cx="8.5" cy="18.2" r="1.8"/></g><circle cx="3" cy="2.8" r="1.2" fill="#2e4a6e"/><circle cx="21" cy="2.8" r="1.2" fill="#2e4a6e"/><rect x="15" y="15" width="9" height="9" rx="1.6" fill="#c9a50a"/><g stroke="#fff" stroke-width="1.35" stroke-linecap="round"><path d="M19.5 16.6 V22.4 M17 18 L22 21 M22 18 L17 21"/></g></g>
<rect x="222" y="98" width="1" height="23" fill="#c2c2c2"/>
<rect x="223" y="98" width="1" height="23" fill="#fbfbfb"/>
<rect x="234" y="101" width="1" height="1" fill="#bcbcbc"/><rect x="237" y="101" width="1" height="1" fill="#bcbcbc"/><rect x="235" y="102" width="1" height="1" fill="#fff" opacity="0.7"/><rect x="238" y="102" width="1" height="1" fill="#fff" opacity="0.7"/><rect x="234" y="104" width="1" height="1" fill="#bcbcbc"/><rect x="237" y="104" width="1" height="1" fill="#bcbcbc"/><rect x="235" y="105" width="1" height="1" fill="#fff" opacity="0.7"/><rect x="238" y="105" width="1" height="1" fill="#fff" opacity="0.7"/><rect x="234" y="107" width="1" height="1" fill="#bcbcbc"/><rect x="237" y="107" width="1" height="1" fill="#bcbcbc"/><rect x="235" y="108" width="1" height="1" fill="#fff" opacity="0.7"/><rect x="238" y="108" width="1" height="1" fill="#fff" opacity="0.7"/><rect x="234" y="110" width="1" height="1" fill="#bcbcbc"/><rect x="237" y="110" width="1" height="1" fill="#bcbcbc"/><rect x="235" y="111" width="1" height="1" fill="#fff" opacity="0.7"/><rect x="238" y="111" width="1" height="1" fill="#fff" opacity="0.7"/><rect x="234" y="113" width="1" height="1" fill="#bcbcbc"/><rect x="237" y="113" width="1" height="1" fill="#bcbcbc"/><rect x="235" y="114" width="1" height="1" fill="#fff" opacity="0.7"/><rect x="238" y="114" width="1" height="1" fill="#fff" opacity="0.7"/><rect x="234" y="116" width="1" height="1" fill="#bcbcbc"/><rect x="237" y="116" width="1" height="1" fill="#bcbcbc"/><rect x="235" y="117" width="1" height="1" fill="#fff" opacity="0.7"/><rect x="238" y="117" width="1" height="1" fill="#fff" opacity="0.7"/>
<g transform="translate(246.0 97.0)"><path d="M2.80 22.00 L7.27 18.64 L15.24 2.61 L10.76 0.39 L2.79 16.41 Z" fill="#d6d3cc" stroke="#c2beb6" stroke-width="0.7" stroke-linejoin="round"/><path d="M2.80 22.00 L7.27 18.64 L2.79 16.41 Z" fill="#efefec" stroke="#c2beb6" stroke-width="0.6"/><path d="M14.26 4.58 L15.24 2.61 L10.76 0.39 L9.78 2.36 Z" fill="#ecebe8" stroke="#c2beb6" stroke-width="0.5"/><path d="M8.00 22.50 L12.50 19.19 L20.73 3.14 L16.27 0.86 L8.05 16.91 Z" fill="#d6d3cc" stroke="#c2beb6" stroke-width="0.7" stroke-linejoin="round"/><path d="M8.00 22.50 L12.50 19.19 L8.05 16.91 Z" fill="#efefec" stroke="#c2beb6" stroke-width="0.6"/><path d="M19.72 5.10 L20.73 3.14 L16.27 0.86 L15.27 2.82 Z" fill="#ecebe8" stroke="#c2beb6" stroke-width="0.5"/><path d="M20.3 21 h5.4 l-2.7 3.2 Z" fill="#8a8a8a"/></g>
<g transform="translate(279.0 97.0)"><path d="M4.80 22.50 L9.60 19.46 L18.95 2.82 L14.25 0.18 L4.90 16.82 Z" fill="#d6d3cc" stroke="#c2beb6" stroke-width="0.7" stroke-linejoin="round"/><path d="M4.80 22.50 L9.60 19.46 L4.90 16.82 Z" fill="#efefec" stroke="#c2beb6" stroke-width="0.6"/><path d="M17.88 4.74 L18.95 2.82 L14.25 0.18 L13.17 2.10 Z" fill="#ecebe8" stroke="#c2beb6" stroke-width="0.5"/></g>
<g transform="translate(311.0 97.0)"><rect x="2.5" y="1.7" width="19.5" height="20.5" rx="2.3" fill="#d4d4d4" stroke="#cacaca"/><rect x="5.5" y="2.5" width="13.5" height="9" fill="#ebebeb"/><path d="M7.5 4.8 H17 M7.5 7 H17 M7.5 9.2 H17" stroke="#d2d2d2" stroke-width="0.7"/><rect x="6.5" y="15" width="12" height="7" fill="#e9e9e9"/><rect x="8.2" y="16.3" width="3" height="4.6" fill="#cfcfcf"/><path d="M13.00 22.50 L17.15 19.19 L22.53 10.44 L19.47 8.56 L14.09 17.30 Z" fill="#d6d3cc" stroke="#c2beb6" stroke-width="0.7" stroke-linejoin="round"/><path d="M13.00 22.50 L17.15 19.19 L14.09 17.30 Z" fill="#efefec" stroke="#c2beb6" stroke-width="0.6"/><path d="M21.38 12.32 L22.53 10.44 L19.47 8.56 L18.31 10.43 Z" fill="#ecebe8" stroke="#c2beb6" stroke-width="0.5"/></g>
<g transform="translate(345.0 97.0)"><g opacity="0.75"><circle cx="2.8" cy="11.8" r="2.7" fill="#cfcfcf" stroke="#bdbdbd" stroke-width="0.6"/><circle cx="11.2" cy="3.8" r="2.7" fill="#cfcfcf" stroke="#bdbdbd" stroke-width="0.6"/><circle cx="20" cy="6" r="2.7" fill="#cfcfcf" stroke="#bdbdbd" stroke-width="0.6"/><rect x="13.3" y="13" width="10.8" height="10.6" rx="1.8" fill="#bdb9a6"/><g stroke="#fff" stroke-width="1.3" stroke-linecap="round"><path d="M18.7 14.7 V21.9 M15.6 16.5 L21.8 20.1 M21.8 16.5 L15.6 20.1"/></g><circle cx="18.7" cy="18.3" r="1.8" fill="#bdb9a6" stroke="#fff" stroke-width="1.1"/></g></g>
<g transform="translate(379.5 97.0)"><rect x="3.5" y="3" width="6" height="5.8" fill="#c2c2c2"/><circle cx="6.5" cy="5.9" r="2" fill="#f4f4f4"/><circle cx="6.5" cy="5.9" r="0.8" fill="#b4b4b4"/><path d="M9.5 6 H19.5" stroke="#d4d4d4" stroke-width="1.5"/><path d="M5 9 L1 21.5" stroke="#bdbdbd" stroke-width="0.9"/><path d="M8.2 9.8 L12 8.6 L15.2 12.4 L11.8 15.4 Z" fill="#dedede"/><path d="M16 14 L21 9.5" stroke="#dadada" stroke-width="1.7"/><path d="M8 21.5 L14.5 14" stroke="#d2cfc3" stroke-width="3.2"/><path d="M13.2 12.8 L20.5 21.5" stroke="#c9c6ba" stroke-width="3.4"/></g>
<g transform="translate(423.0 97.0)"><g opacity="0.8"><rect x="2.5" y="2" width="18.5" height="5" fill="#d9d6c8" stroke="#c8c5b5" stroke-width="0.6"/><rect x="2.5" y="9.5" width="18.5" height="5" fill="#d9d6c8" stroke="#c8c5b5" stroke-width="0.6"/><rect x="2.5" y="17" width="18.5" height="5" fill="#d9d6c8" stroke="#c8c5b5" stroke-width="0.6"/></g><path d="M9.00 22.00 L13.34 18.68 L21.93 3.06 L18.07 0.94 L9.48 16.56 Z" fill="#d4cccc" stroke="#bdb6b6" stroke-width="0.7" stroke-linejoin="round"/><path d="M9.00 22.00 L13.34 18.68 L9.48 16.56 Z" fill="#efefec" stroke="#bdb6b6" stroke-width="0.6"/><path d="M20.87 4.99 L21.93 3.06 L18.07 0.94 L17.01 2.87 Z" fill="#ecebe8" stroke="#bdb6b6" stroke-width="0.5"/></g>
<g transform="translate(455.0 97.0)"><g opacity="0.75"><rect x="2.5" y="1.5" width="13" height="12" fill="#d9d6c8" stroke="#c5c2b2" stroke-width="0.6"/><path d="M4 4.5 H20.5" stroke="#c9a9a9" stroke-width="1.6"/><path d="M5 7.5 H19.5 L18.5 22.5 H6 Z" fill="#cdb9b9" stroke="#c2abab" stroke-width="1"/><path d="M9.2 9.5 V20.8" stroke="#efe6e6" stroke-width="1.3"/><path d="M12.25 9.5 V20.8" stroke="#efe6e6" stroke-width="1.3"/><path d="M15.3 9.5 V20.8" stroke="#efe6e6" stroke-width="1.3"/></g></g>
<g transform="translate(489.0 97.0)"><g opacity="0.65"><path d="M1.5 3 L17 13.5 M1.5 11.5 L17 6" stroke="#d0d0d0" stroke-width="2.2" stroke-linecap="round"/><path d="M1.5 3 L15 12.2" stroke="#e6e6e6" stroke-width="0.8"/><ellipse cx="19.7" cy="5.8" rx="2.8" ry="2.4" fill="none" stroke="#c9a9b0" stroke-width="1.5" transform="rotate(-25 19.7 5.8)"/><ellipse cx="19.3" cy="16" rx="2.5" ry="3.2" fill="none" stroke="#c9a9b0" stroke-width="1.5" transform="rotate(-30 19.3 16)"/></g></g>
<g transform="translate(522.0 97.0)"><g opacity="0.8"><path d="M9 1.5 h7 l3.5 3.5 v12 h-10.5 Z" fill="#f0f0f0" stroke="#c4c4c4" stroke-width="0.9"/><path d="M16 1.5 v3.5 h3.5" fill="none" stroke="#c4c4c4" stroke-width="0.8"/><path d="M11 8.0 h6 M11 10.5 h6 M11 13.0 h6" stroke="#c4c4c4" stroke-width="0.7"/><path d="M4.3 6 h7 l3.5 3.5 v12 h-10.5 Z" fill="#f0f0f0" stroke="#c4c4c4" stroke-width="0.9"/><path d="M11.3 6 v3.5 h3.5" fill="none" stroke="#c4c4c4" stroke-width="0.8"/><path d="M6.3 12.5 h6 M6.3 15 h6 M6.3 17.5 h6" stroke="#c4c4c4" stroke-width="0.7"/></g></g>
<g transform="translate(555.0 97.0)"><g opacity="0.85"><rect x="2.5" y="3.5" width="15" height="19" fill="#e3e0da" stroke="#c2beb6" stroke-width="0.9"/><rect x="5.5" y="1.5" width="9" height="4" rx="0.8" fill="#dedede" stroke="#bdbdbd" stroke-width="0.8"/><path d="M5 7.5 h7 l3 3 v10 h-10 Z" fill="#f4f4f4" stroke="#c4c4c4" stroke-width="0.7"/><path d="M6.5 12 h6.5 M6.5 14.3 h6.5 M6.5 16.6 h6.5 M6.5 18.9 h4" stroke="#c9c9c9" stroke-width="0.7"/></g></g>
<g transform="translate(588.0 97.0)"><path d="M1.5 9.2 L9 2.5 V6.5 Q18 6.5 18.2 14 Q18.2 20.5 11 20.5 Q9 20.5 9 18.8 Q9 17.2 11 17.2 Q13.2 17 13.2 14.8 Q13.2 12.3 9 12.3 V16 Z" fill="#d2cfca" stroke="#d2cfca" stroke-width="0.4" stroke-linejoin="round"/></g>
<path d="M408.5 107.0 L415.5 107.0 L412 111.0 Z" fill="#8a8a8a"/>
<g transform="translate(621.0 97.0)"><g transform="translate(24 0) scale(-1 1)"><path d="M1.5 9.2 L9 2.5 V6.5 Q18 6.5 18.2 14 Q18.2 20.5 11 20.5 Q9 20.5 9 18.8 Q9 17.2 11 17.2 Q13.2 17 13.2 14.8 Q13.2 12.3 9 12.3 V16 Z" fill="#cfd2cf" stroke="#cfd2cf" stroke-width="0.4" stroke-linejoin="round"/></g></g>
<rect x="658" y="101" width="1" height="1" fill="#bcbcbc"/><rect x="661" y="101" width="1" height="1" fill="#bcbcbc"/><rect x="659" y="102" width="1" height="1" fill="#fff" opacity="0.7"/><rect x="662" y="102" width="1" height="1" fill="#fff" opacity="0.7"/><rect x="658" y="104" width="1" height="1" fill="#bcbcbc"/><rect x="661" y="104" width="1" height="1" fill="#bcbcbc"/><rect x="659" y="105" width="1" height="1" fill="#fff" opacity="0.7"/><rect x="662" y="105" width="1" height="1" fill="#fff" opacity="0.7"/><rect x="658" y="107" width="1" height="1" fill="#bcbcbc"/><rect x="661" y="107" width="1" height="1" fill="#bcbcbc"/><rect x="659" y="108" width="1" height="1" fill="#fff" opacity="0.7"/><rect x="662" y="108" width="1" height="1" fill="#fff" opacity="0.7"/><rect x="658" y="110" width="1" height="1" fill="#bcbcbc"/><rect x="661" y="110" width="1" height="1" fill="#bcbcbc"/><rect x="659" y="111" width="1" height="1" fill="#fff" opacity="0.7"/><rect x="662" y="111" width="1" height="1" fill="#fff" opacity="0.7"/><rect x="658" y="113" width="1" height="1" fill="#bcbcbc"/><rect x="661" y="113" width="1" height="1" fill="#bcbcbc"/><rect x="659" y="114" width="1" height="1" fill="#fff" opacity="0.7"/><rect x="662" y="114" width="1" height="1" fill="#fff" opacity="0.7"/><rect x="658" y="116" width="1" height="1" fill="#bcbcbc"/><rect x="661" y="116" width="1" height="1" fill="#bcbcbc"/><rect x="659" y="117" width="1" height="1" fill="#fff" opacity="0.7"/><rect x="662" y="117" width="1" height="1" fill="#fff" opacity="0.7"/>
<g transform="translate(670.0 97.0)"><path d="M11 1.5 Q6 1.5 6 5 V8 H12 V9 H4 Q1.3 9.3 1.3 13 Q1.3 16.7 4 17 H6 V13.5 Q6 11 9 11 H14 Q16.5 11 16.5 8.5 V5 Q16.5 1.5 11 1.5 Z" fill="#3a75ad" stroke="#2f6396" stroke-width="0.4"/><circle cx="8.4" cy="4.6" r="1.1" fill="#fff"/><path d="M13 22.5 Q18 22.5 18 19 V16 H12 V15 H20 Q22.7 14.7 22.7 11 Q22.7 7.3 20 7 H18 V10.5 Q18 13 15 13 H10 Q7.5 13 7.5 15.5 V19 Q7.5 22.5 13 22.5 Z" fill="#f7cf3f" stroke="#e0b82c" stroke-width="0.4"/><circle cx="15.6" cy="19.4" r="1.1" fill="#fff"/><path d="M17.5 17.5 L23.3 20.2 L17.5 23" stroke="#333" stroke-width="1.4" fill="none"/></g>
<g transform="translate(703.0 97.0)"><path d="M12 2.8 L21 9.4 L12 16 L3 9.4 Z" fill="#3f6a78" stroke="#3f6a78" stroke-width="5.2" stroke-linejoin="round" transform="translate(0 4.2)"/><path d="M12 2.8 L21 9.4 L12 16 L3 9.4 Z" fill="#eef2f3" stroke="#eef2f3" stroke-width="5.2" stroke-linejoin="round" transform="translate(0 2.6)"/><path d="M12 2.8 L21 9.4 L12 16 L3 9.4 Z" fill="#7ebac8" stroke="#7ebac8" stroke-width="5.2" stroke-linejoin="round"/><path d="M4.6 7.4 C9 7.4 11.6 11 11 16.2 C6.6 15.6 4.2 12 4.6 7.4 Z" fill="#5fae3c"/><path d="M13.4 15.6 C6.5 10 11 3 18.8 0.4 C22.5 7 21 13 13.4 15.6 Z" fill="#a8dc5a"/><path d="M18.2 2 Q15.6 8.5 13.7 15" stroke="#8cc848" stroke-width="0.7" fill="none"/></g>
<path d="M761.2 106.8 l2.8 2.7 l-2.8 2.7 M765.2 106.8 l2.8 2.7 l-2.8 2.7" stroke="#000" stroke-width="1.35" fill="none"/>
<rect x="779" y="101" width="1" height="1" fill="#bcbcbc"/><rect x="782" y="101" width="1" height="1" fill="#bcbcbc"/><rect x="780" y="102" width="1" height="1" fill="#fff" opacity="0.7"/><rect x="783" y="102" width="1" height="1" fill="#fff" opacity="0.7"/><rect x="779" y="104" width="1" height="1" fill="#bcbcbc"/><rect x="782" y="104" width="1" height="1" fill="#bcbcbc"/><rect x="780" y="105" width="1" height="1" fill="#fff" opacity="0.7"/><rect x="783" y="105" width="1" height="1" fill="#fff" opacity="0.7"/><rect x="779" y="107" width="1" height="1" fill="#bcbcbc"/><rect x="782" y="107" width="1" height="1" fill="#bcbcbc"/><rect x="780" y="108" width="1" height="1" fill="#fff" opacity="0.7"/><rect x="783" y="108" width="1" height="1" fill="#fff" opacity="0.7"/><rect x="779" y="110" width="1" height="1" fill="#bcbcbc"/><rect x="782" y="110" width="1" height="1" fill="#bcbcbc"/><rect x="780" y="111" width="1" height="1" fill="#fff" opacity="0.7"/><rect x="783" y="111" width="1" height="1" fill="#fff" opacity="0.7"/><rect x="779" y="113" width="1" height="1" fill="#bcbcbc"/><rect x="782" y="113" width="1" height="1" fill="#bcbcbc"/><rect x="780" y="114" width="1" height="1" fill="#fff" opacity="0.7"/><rect x="783" y="114" width="1" height="1" fill="#fff" opacity="0.7"/><rect x="779" y="116" width="1" height="1" fill="#bcbcbc"/><rect x="782" y="116" width="1" height="1" fill="#bcbcbc"/><rect x="780" y="117" width="1" height="1" fill="#fff" opacity="0.7"/><rect x="783" y="117" width="1" height="1" fill="#fff" opacity="0.7"/>
<g transform="translate(791.0 97.0)"><rect x="1.5" y="2.5" width="19.5" height="18" fill="#e4e4e4" stroke="#333" stroke-width="1" stroke-dasharray="2 1.5"/><rect x="3" y="4" width="11" height="11" fill="#fbe04a" stroke="#d9b534" stroke-width="0.9"/><g transform="translate(10.6 9.8) scale(0.98)"><path d="M0 0 L0 13.2 L3.1 10.4 L5.4 15.4 L7.6 14.4 L5.3 9.6 L9.4 9.4 Z" fill="#fff" stroke="#333" stroke-width="1" stroke-linejoin="round" transform="rotate(-24)"/></g></g>
<path d="M821.5 107.0 L828.5 107.0 L825 111.0 Z" fill="#555"/>
<path d="M931.2 106.8 l2.8 2.7 l-2.8 2.7 M935.2 106.8 l2.8 2.7 l-2.8 2.7" stroke="#000" stroke-width="1.35" fill="none"/>
<rect x="949" y="101" width="1" height="1" fill="#bcbcbc"/><rect x="952" y="101" width="1" height="1" fill="#bcbcbc"/><rect x="950" y="102" width="1" height="1" fill="#fff" opacity="0.7"/><rect x="953" y="102" width="1" height="1" fill="#fff" opacity="0.7"/><rect x="949" y="104" width="1" height="1" fill="#bcbcbc"/><rect x="952" y="104" width="1" height="1" fill="#bcbcbc"/><rect x="950" y="105" width="1" height="1" fill="#fff" opacity="0.7"/><rect x="953" y="105" width="1" height="1" fill="#fff" opacity="0.7"/><rect x="949" y="107" width="1" height="1" fill="#bcbcbc"/><rect x="952" y="107" width="1" height="1" fill="#bcbcbc"/><rect x="950" y="108" width="1" height="1" fill="#fff" opacity="0.7"/><rect x="953" y="108" width="1" height="1" fill="#fff" opacity="0.7"/><rect x="949" y="110" width="1" height="1" fill="#bcbcbc"/><rect x="952" y="110" width="1" height="1" fill="#bcbcbc"/><rect x="950" y="111" width="1" height="1" fill="#fff" opacity="0.7"/><rect x="953" y="111" width="1" height="1" fill="#fff" opacity="0.7"/><rect x="949" y="113" width="1" height="1" fill="#bcbcbc"/><rect x="952" y="113" width="1" height="1" fill="#bcbcbc"/><rect x="950" y="114" width="1" height="1" fill="#fff" opacity="0.7"/><rect x="953" y="114" width="1" height="1" fill="#fff" opacity="0.7"/><rect x="949" y="116" width="1" height="1" fill="#bcbcbc"/><rect x="952" y="116" width="1" height="1" fill="#bcbcbc"/><rect x="950" y="117" width="1" height="1" fill="#fff" opacity="0.7"/><rect x="953" y="117" width="1" height="1" fill="#fff" opacity="0.7"/>
<g transform="translate(961.0 97.0)"><rect x="2.5" y="2.5" width="19" height="19.5" rx="0.8" fill="#5b8cc9" stroke="#2e3e55" stroke-width="1"/><rect x="3" y="3" width="4.2" height="18.5" fill="#2e3e55"/><text x="10.3" y="17.3" font-size="14" fill="#fff">?</text></g>
<rect x="998" y="101" width="1" height="1" fill="#bcbcbc"/><rect x="1001" y="101" width="1" height="1" fill="#bcbcbc"/><rect x="999" y="102" width="1" height="1" fill="#fff" opacity="0.7"/><rect x="1002" y="102" width="1" height="1" fill="#fff" opacity="0.7"/><rect x="998" y="104" width="1" height="1" fill="#bcbcbc"/><rect x="1001" y="104" width="1" height="1" fill="#bcbcbc"/><rect x="999" y="105" width="1" height="1" fill="#fff" opacity="0.7"/><rect x="1002" y="105" width="1" height="1" fill="#fff" opacity="0.7"/><rect x="998" y="107" width="1" height="1" fill="#bcbcbc"/><rect x="1001" y="107" width="1" height="1" fill="#bcbcbc"/><rect x="999" y="108" width="1" height="1" fill="#fff" opacity="0.7"/><rect x="1002" y="108" width="1" height="1" fill="#fff" opacity="0.7"/><rect x="998" y="110" width="1" height="1" fill="#bcbcbc"/><rect x="1001" y="110" width="1" height="1" fill="#bcbcbc"/><rect x="999" y="111" width="1" height="1" fill="#fff" opacity="0.7"/><rect x="1002" y="111" width="1" height="1" fill="#fff" opacity="0.7"/><rect x="998" y="113" width="1" height="1" fill="#bcbcbc"/><rect x="1001" y="113" width="1" height="1" fill="#bcbcbc"/><rect x="999" y="114" width="1" height="1" fill="#fff" opacity="0.7"/><rect x="1002" y="114" width="1" height="1" fill="#fff" opacity="0.7"/><rect x="998" y="116" width="1" height="1" fill="#bcbcbc"/><rect x="1001" y="116" width="1" height="1" fill="#bcbcbc"/><rect x="999" y="117" width="1" height="1" fill="#fff" opacity="0.7"/><rect x="1002" y="117" width="1" height="1" fill="#fff" opacity="0.7"/>
<g transform="translate(1010.0 97.0)"><path d="M6 5.5 Q14 0.5 19.5 4 Q22 7 18.5 9.5 Q13 11 14 15.5 Q10 18 6.5 14.5 Q4 10 6 5.5 Z" fill="#5b8cc9" stroke="#3f6ea8" stroke-width="0.7"/><path d="M3.5 3.5 L12.2 9 L19.8 3.2 M12.2 9 L3.6 20.8" stroke="#3f6ea8" stroke-width="0.9" fill="none"/><g fill="#f5e04a" stroke="#c9a92a" stroke-width="0.8"><circle cx="3.5" cy="3.5" r="2.3"/><circle cx="19.8" cy="3.2" r="2.3"/><circle cx="12.2" cy="9" r="2.1"/><circle cx="3.6" cy="20.8" r="2.3"/></g><path d="M12.5 17.5 L15.7 21 L22.5 13" stroke="#8a7a1a" stroke-width="3" fill="none"/><path d="M12.5 17.5 L15.7 21 L22.5 13" stroke="#f5e04a" stroke-width="1.7" fill="none"/></g>
<rect x="6" y="139" width="1" height="1" fill="#bcbcbc"/><rect x="9" y="139" width="1" height="1" fill="#bcbcbc"/><rect x="7" y="140" width="1" height="1" fill="#fff" opacity="0.7"/><rect x="10" y="140" width="1" height="1" fill="#fff" opacity="0.7"/><rect x="6" y="142" width="1" height="1" fill="#bcbcbc"/><rect x="9" y="142" width="1" height="1" fill="#bcbcbc"/><rect x="7" y="143" width="1" height="1" fill="#fff" opacity="0.7"/><rect x="10" y="143" width="1" height="1" fill="#fff" opacity="0.7"/><rect x="6" y="145" width="1" height="1" fill="#bcbcbc"/><rect x="9" y="145" width="1" height="1" fill="#bcbcbc"/><rect x="7" y="146" width="1" height="1" fill="#fff" opacity="0.7"/><rect x="10" y="146" width="1" height="1" fill="#fff" opacity="0.7"/><rect x="6" y="148" width="1" height="1" fill="#bcbcbc"/><rect x="9" y="148" width="1" height="1" fill="#bcbcbc"/><rect x="7" y="149" width="1" height="1" fill="#fff" opacity="0.7"/><rect x="10" y="149" width="1" height="1" fill="#fff" opacity="0.7"/><rect x="6" y="151" width="1" height="1" fill="#bcbcbc"/><rect x="9" y="151" width="1" height="1" fill="#bcbcbc"/><rect x="7" y="152" width="1" height="1" fill="#fff" opacity="0.7"/><rect x="10" y="152" width="1" height="1" fill="#fff" opacity="0.7"/><rect x="6" y="154" width="1" height="1" fill="#bcbcbc"/><rect x="9" y="154" width="1" height="1" fill="#bcbcbc"/><rect x="7" y="155" width="1" height="1" fill="#fff" opacity="0.7"/><rect x="10" y="155" width="1" height="1" fill="#fff" opacity="0.7"/>
<g transform="translate(17.0 135.0)"><path d="M5.5 5.5 H21.5 V15.5 H5.5 L1.5 10.5 Z" fill="#f9e04a" stroke="#c9a000" stroke-width="1.1" stroke-linejoin="round"/><text x="6" y="13.8" font-size="9" font-weight="bold" fill="#222" textLength="13.5" lengthAdjust="spacingAndGlyphs" font-family="DejaVu Sans,Liberation Sans,sans-serif">abc</text></g>
<g transform="translate(51.0 135.0)"><circle cx="9" cy="9" r="7" fill="#1fa055"/><path d="M9 9 L9 2 A7 7 0 0 1 15.06 12.5 Z" fill="#c81414"/><path d="M9 9 L2.94 5.5 A7 7 0 0 1 15.06 5.5 Z" fill="#f7d117"/><path d="M9 9 L15.06 5.5 A7 7 0 0 1 12.5 15.06 Z" fill="#a80d0d"/><rect x="10" y="16" width="3.4" height="6.5" fill="#f7c21a" stroke="#b98c00" stroke-width="0.5"/><rect x="14" y="10" width="3.4" height="12.5" fill="#1fa055" stroke="#0d6e36" stroke-width="0.5"/><rect x="18" y="17" width="3.4" height="5.5" fill="#b01010" stroke="#7a0808" stroke-width="0.5"/></g>
<rect x="83" y="136" width="1" height="23" fill="#c2c2c2"/>
<rect x="84" y="136" width="1" height="23" fill="#fbfbfb"/>
<g transform="translate(90.0 135.0)"><path d="M5.5 5.5 H19.5 V15.5 H5.5 L1.5 10.5 Z" fill="#a9c8ee" stroke="#4f8ad0" stroke-width="1.1" stroke-linejoin="round"/><text x="6" y="13.8" font-size="9" font-weight="bold" fill="#1a2a44" textLength="10" lengthAdjust="spacingAndGlyphs" font-family="DejaVu Sans,Liberation Sans,sans-serif">ab</text><path d="M18.6 9 L19.4 15" stroke="#f4f4f4" stroke-width="2" stroke-linecap="round"/><path d="M18.6 9 L19.4 15" stroke="#999" stroke-width="0.5" stroke-linecap="round" transform="translate(1.1 0)"/><circle cx="19.8" cy="18.8" r="4.3" fill="#9a1c1c"/><circle cx="18.6" cy="17.4" r="1.3" fill="#c85050" opacity="0.8"/></g>
<g transform="translate(123.0 135.0)"><path d="M5.5 5.5 H21.5 V15.5 H5.5 L1.5 10.5 Z" fill="#fbdcdc" stroke="#e01010" stroke-width="1.1" stroke-linejoin="round"/><text x="6" y="13.8" font-size="9" font-weight="bold" fill="#e01010" textLength="13.5" lengthAdjust="spacingAndGlyphs" font-family="DejaVu Sans,Liberation Sans,sans-serif">abc</text></g>
<rect x="156" y="136" width="1" height="23" fill="#c2c2c2"/>
<rect x="157" y="136" width="1" height="23" fill="#fbfbfb"/>
<g transform="translate(164.0 135.0)"><g opacity="0.75"><path d="M5.5 5.5 H19.5 V15.5 H5.5 L1.5 10.5 Z" fill="#e4e2d8" stroke="#c9c6b8" stroke-width="1.1" stroke-linejoin="round"/><text x="6" y="13.8" font-size="9" font-weight="bold" fill="#b8b6ac" textLength="10" lengthAdjust="spacingAndGlyphs" font-family="DejaVu Sans,Liberation Sans,sans-serif">ab</text><path d="M18.6 9 L19.4 15" stroke="#f4f4f4" stroke-width="1.8" stroke-linecap="round"/><circle cx="19.8" cy="18.6" r="4.2" fill="#cfc6c6"/></g></g>
<g transform="translate(197.0 135.0)"><g opacity="0.8"><path d="M5.5 5.5 H21.5 V15.5 H5.5 L1.5 10.5 Z" fill="#e6e4da" stroke="#cfccbe" stroke-width="1.1" stroke-linejoin="round"/><text x="6" y="13.8" font-size="9" font-weight="bold" fill="#bdbbb0" textLength="14.5" lengthAdjust="spacingAndGlyphs" font-family="DejaVu Sans,Liberation Sans,sans-serif">abc</text><path d="M6 19 Q12.5 13.5 19 19 Q12.5 24 6 19 Z" fill="#f4f4f4" stroke="#c4c4c4" stroke-width="0.8"/><circle cx="12.5" cy="19" r="2.3" fill="#c9c9c9"/><path d="M6 16.5 Q12.5 12 19 16" stroke="#d4d4d4" stroke-width="0.7" fill="none"/></g></g>
<g transform="translate(230.0 135.0)"><g opacity="0.8"><path d="M5.5 5.5 H21.5 V15.5 H5.5 L1.5 10.5 Z" fill="#e6e4da" stroke="#cfccbe" stroke-width="1.1" stroke-linejoin="round"/><text x="6" y="13.8" font-size="9" font-weight="bold" fill="#bdbbb0" textLength="14.5" lengthAdjust="spacingAndGlyphs" font-family="DejaVu Sans,Liberation Sans,sans-serif">abc</text><rect x="13.5" y="13.5" width="10" height="10" rx="1.8" fill="#c4c4c4"/><path d="M15 17.2 H18.5 V15 L22.3 18.5 L18.5 22 V19.8 H15 Z" fill="#fff"/></g></g>
<g transform="translate(263.0 135.0)"><g opacity="0.8"><path d="M5.5 5.5 H21.5 V15.5 H5.5 L1.5 10.5 Z" fill="#e6e4da" stroke="#cfccbe" stroke-width="1.1" stroke-linejoin="round"/><text x="6" y="13.8" font-size="9" font-weight="bold" fill="#bdbbb0" textLength="14.5" lengthAdjust="spacingAndGlyphs" font-family="DejaVu Sans,Liberation Sans,sans-serif">abc</text><rect x="13.5" y="13.5" width="10" height="10" rx="1.8" fill="#c4c4c4"/><path d="M16 20.5 A3 3 0 1 1 20.5 21.3" stroke="#fff" stroke-width="1.6" fill="none"/><path d="M18.5 22.8 L21.8 22.6 L20.4 19.6 Z" fill="#fff"/></g></g>
<g transform="translate(296.0 135.0)"><g opacity="0.8"><path d="M5.5 5.5 H21.5 V15.5 H5.5 L1.5 10.5 Z" fill="#e6e4da" stroke="#cfccbe" stroke-width="1.1" stroke-linejoin="round"/><text x="6" y="13.8" font-size="9" font-weight="bold" fill="#bdbbb0" textLength="14.5" lengthAdjust="spacingAndGlyphs" font-family="DejaVu Sans,Liberation Sans,sans-serif">abc</text><rect x="13.5" y="13.5" width="10" height="10" rx="1.8" fill="#d0ccbe"/><path d="M15.5 21.5 L21.5 15.5" stroke="#fff" stroke-width="2.2"/><path d="M14.8 22.2 l1.6 -0.4 l-1.2 -1.2 Z" fill="#fff"/></g></g>
<text x="5.5" y="182" font-size="12" fill="#000" textLength="41.5" lengthAdjust="spacingAndGlyphs" >Browser</text>
<rect x="157.5" y="172.5" width="10" height="10" fill="#f8f8f8" stroke="#6a6662" stroke-width="1" rx="2.2" />
<rect x="161.6" y="174.4" width="4.2" height="4.2" rx="0.8" fill="none" stroke="#5a5652" stroke-width="0.9"/><rect x="159.4" y="176.5" width="4.4" height="4.2" rx="1" fill="#fff" stroke="#5a5652" stroke-width="0.9"/>
<rect x="171.5" y="172.5" width="10" height="10" fill="#f8f8f8" stroke="#6a6662" stroke-width="1" rx="2.2" />
<path d="M173.7 174.7 l5.6 5.6 M179.3 174.7 l-5.6 5.6" stroke="#5a5652" stroke-width="1.7"/>
<g transform="translate(9.0 194.0) scale(0.6666666666666666)"><rect x="2" y="2" width="16" height="16" fill="#fafafa" stroke="#6e6e6e" stroke-width="1.4"/><circle cx="19" cy="19.5" r="3.8" fill="#7fb37a" stroke="#5f9458" stroke-width="1"/></g>
<g transform="translate(34.0 194.0) scale(0.6666666666666666)"><defs><linearGradient id="rfg" x1="0" y1="0" x2="0" y2="1"><stop offset="0" stop-color="#74abe8"/><stop offset="1" stop-color="#3a74bd"/></linearGradient></defs><path d="M1.8 13.2 A10.3 10.3 0 0 1 14.67 2.05 L15.18 0.12 L22.2 9.2 L12.4 9.6 L13.37 6.88 A5.3 5.3 0 0 0 6.75 12.6 Z" fill="url(#rfg)" stroke="#3a6fb0" stroke-width="0.5" stroke-linejoin="round"/><path d="M1.8 13.2 A10.3 10.3 0 0 1 14.67 2.05 L15.18 0.12 L22.2 9.2 L12.4 9.6 L13.37 6.88 A5.3 5.3 0 0 0 6.75 12.6 Z" fill="url(#rfg)" stroke="#3a6fb0" stroke-width="0.5" stroke-linejoin="round" transform="rotate(180 12 12)"/><path d="M2.8 11 A9.3 9.3 0 0 1 16 3.7" stroke="#b4d4f4" stroke-width="0.9" fill="none"/></g>
<g transform="translate(59.0 194.0) scale(0.6666666666666666)"><path d="M2 2.5 H22 L14.5 12.5 V22 L9.5 19.5 V12.5 Z" fill="#5b8cc9" stroke="#3f6ea8" stroke-width="0.8" stroke-linejoin="round"/><rect x="2" y="1.5" width="20" height="3" fill="#f5e04a" stroke="#c9a92a" stroke-width="0.7"/></g>
<g transform="translate(84.4 194.0) scale(0.6666666666666666)"><path d="M2.5 3.5 H13 M4.5 3.5 V20.5 M4.5 11 H8 M4.5 18.5 H8" stroke="#8a8a8a" stroke-width="0.8" fill="none"/><rect x="6.5" y="9" width="3.4" height="3.4" fill="#f7941d" stroke="#c96f00" stroke-width="0.5"/><rect x="6.5" y="16.5" width="3.4" height="3.4" fill="#f7941d" stroke="#c96f00" stroke-width="0.5"/><path d="M16 1.5 L22.8 9.5 H18.8 V21.5 H13.2 V9.5 H9.2 Z" fill="#5b8cc9" stroke="#2f5588" stroke-width="0.9" stroke-linejoin="round"/></g>
<g transform="translate(109.0 194.0) scale(0.6666666666666666)"><circle cx="12" cy="12" r="9.6" fill="#5b8cc9" stroke="#3f6ea8" stroke-width="0.8"/><path d="M4 9 A8.5 8.5 0 0 1 20 9 Q12 5 4 9 Z" fill="#8fb4e2" opacity="0.6"/><text x="9" y="18" font-size="16" font-weight="bold" font-style="italic" font-family="Liberation Serif,serif" fill="#fff">i</text></g>
<rect x="2.5" y="218.5" width="181" height="241" fill="#fff" stroke="#b9b9b9" stroke-width="1" />
<linearGradient id="pg1" x1="0" y1="0" x2="0" y2="1"><stop offset="0" stop-color="#b4d4f2"/><stop offset="1" stop-color="#5b9ad8"/></linearGradient><linearGradient id="pg2" x1="0" y1="0" x2="0" y2="1"><stop offset="0" stop-color="#ffffff"/><stop offset="1" stop-color="#c4d4e6"/></linearGradient>
<clipPath id="btc"><rect x="3" y="219" width="166" height="226"/></clipPath><g clip-path="url(#btc)">
<path d="M7.5 223.5 h5 l1.2 1.6 h6.8 v9.4 h-13 Z" fill="#f2f2f2" stroke="#8a8a8a" stroke-width="1" stroke-linejoin="round"/>
<text x="28.6" y="232.8" font-size="12" fill="#000" textLength="15" lengthAdjust="spacingAndGlyphs" >niji</text>
<path d="M7.5 241.5 h5 l1.2 1.6 h6.8 v9.4 h-13 Z" fill="#f2f2f2" stroke="#8a8a8a" stroke-width="1" stroke-linejoin="round"/>
<text x="28.6" y="250.8" font-size="12" fill="#000" textLength="84.5" lengthAdjust="spacingAndGlyphs" >pyqgis_in_a_day</text>
<path d="M7.5 259.5 h5 l1.2 1.6 h6.8 v9.4 h-13 Z" fill="#f2f2f2" stroke="#8a8a8a" stroke-width="1" stroke-linejoin="round"/>
<text x="28.6" y="268.8" font-size="12" fill="#000" textLength="101" lengthAdjust="spacingAndGlyphs" >python_foundation</text>
<path d="M7.5 277.5 h4.5 l1 1 h7.5 v1.5 M7.5 279.2 h4.5 l1 1 h7.5" stroke="#8a8a8a" stroke-width="1" fill="none"/><path d="M7.5 281.5 h4.5 l1 1 h7.5 v6 h-13 Z" fill="#f2f2f2" stroke="#8a8a8a" stroke-width="1"/>
<text x="28.6" y="286.8" font-size="12" fill="#000" textLength="49.2" lengthAdjust="spacingAndGlyphs" >qgis2web</text>
<path d="M27.5 295.5 h5 l1.2 1.6 h6.8 v9.4 h-13 Z" fill="#f2f2f2" stroke="#8a8a8a" stroke-width="1" stroke-linejoin="round"/>
<path d="M11.5 296.3 l4 3.7 l-4 3.7 Z" fill="#444"/>
<text x="48.8" y="304.8" font-size="12" fill="#000" textLength="123.2" lengthAdjust="spacingAndGlyphs" >qgis2web_2021_06_02-1</text>
<rect x="27.5" y="311.5" width="13" height="13" rx="1" fill="#f2f2f2" stroke="#777" stroke-width="1"/><path d="M33 312 v12" stroke="#555" stroke-width="2.2" stroke-dasharray="1.2 1"/><rect x="32" y="319.5" width="2.6" height="3.6" fill="#fff" stroke="#555" stroke-width="0.6"/>
<path d="M9.5 316.3 h7 l-3.5 4 Z" fill="#444"/>
<text x="48.8" y="322.8" font-size="12" fill="#000" textLength="106" lengthAdjust="spacingAndGlyphs" >ne_10m_airports .zip</text>
<rect x="3" y="327" width="166" height="18" fill="#eeeeee" />
<path transform="translate(45.6 330.5)" d="M1 3.5 Q1.5 0.3 5 0.7 Q8 3 11.5 0.8 Q15.2 0 15.6 3 Q16 6.5 14.6 7.6 Q11 6.2 8 8 Q5 10 2.6 10.6 Q0.5 8 1 3.5 Z" fill="url(#pg1)" stroke="#3f6ea8" stroke-width="0.9"/>
<text x="68.5" y="340.8" font-size="12" fill="#000" textLength="107" lengthAdjust="spacingAndGlyphs" >ne_10m_airports.shp</text>
<path transform="translate(45.6 348.5)" d="M1 3.5 Q1.5 0.3 5 0.7 Q8 3 11.5 0.8 Q15.2 0 15.6 3 Q16 6.5 14.6 7.6 Q11 6.2 8 8 Q5 10 2.6 10.6 Q0.5 8 1 3.5 Z" fill="url(#pg2)" stroke="#5f7590" stroke-width="0.9"/>
<text x="68.5" y="358.8" font-size="12" fill="#000" textLength="148.5" lengthAdjust="spacingAndGlyphs" >ne_10m_airports.VERSION.txt</text>
<rect x="47.10" y="366.00" width="4.33" height="4.33" fill="#2e3e55"/>
<rect x="51.43" y="366.00" width="4.33" height="4.33" fill="#a9c4e4"/>
<rect x="55.76" y="366.00" width="4.33" height="4.33" fill="#2e3e55"/>
<rect x="47.10" y="370.33" width="4.33" height="4.33" fill="#a9c4e4"/>
<rect x="51.43" y="370.33" width="4.33" height="4.33" fill="#2e3e55"/>
<rect x="55.76" y="370.33" width="4.33" height="4.33" fill="#b9cfea"/>
<rect x="47.10" y="374.66" width="4.33" height="4.33" fill="#2e3e55"/>
<rect x="51.43" y="374.66" width="4.33" height="4.33" fill="#a9c4e4"/>
<rect x="55.76" y="374.66" width="4.33" height="4.33" fill="#f4f8fc"/>
<text x="68.5" y="376.8" font-size="12" fill="#000" textLength="148.5" lengthAdjust="spacingAndGlyphs" >ne_10m_airports.VERSION.txt</text>
<path d="M7.5 385.5 h5 l1.2 1.6 h6.8 v9.4 h-13 Z" fill="#f2f2f2" stroke="#8a8a8a" stroke-width="1" stroke-linejoin="round"/>
<text x="28.6" y="394.8" font-size="12" fill="#000" textLength="80.5" lengthAdjust="spacingAndGlyphs" >spatial_data_viz</text>
<path d="M7.5 403.5 h5 l1.2 1.6 h6.8 v9.4 h-13 Z" fill="#f2f2f2" stroke="#8a8a8a" stroke-width="1" stroke-linejoin="round"/>
<text x="28.6" y="412.8" font-size="12" fill="#000" textLength="93" lengthAdjust="spacingAndGlyphs" >Telegram Desktop</text>
<path d="M7.5 421.5 h5 l1.2 1.6 h6.8 v9.4 h-13 Z" fill="#f2f2f2" stroke="#8a8a8a" stroke-width="1" stroke-linejoin="round"/>
<text x="28.6" y="430.8" font-size="12" fill="#000" textLength="162.6" lengthAdjust="spacingAndGlyphs" >working_with_non_spatial_data</text>
<path d="M7.5 439.5 h5 l1.2 1.6 h6.8 v9.4 h-13 Z" fill="#f2f2f2" stroke="#8a8a8a" stroke-width="1" stroke-linejoin="round"/>
<text x="28.6" y="448.8" font-size="12" fill="#000" textLength="7" lengthAdjust="spacingAndGlyphs" >Z</text>
</g>
<rect x="169.5" y="218.5" width="14" height="227" fill="#e1e1e1" stroke="#b4b4b4" stroke-width="1" />
<rect x="169.5" y="218.5" width="14" height="14" fill="#fdfdfd" stroke="#b4b4b4" stroke-width="1" />
<path d="M172.5 228.5 h7.6 l-3.8 -4 Z" fill="#444"/>
<rect x="169.5" y="431.5" width="14" height="14" fill="#fdfdfd" stroke="#b4b4b4" stroke-width="1" />
<path d="M172.5 436.5 h7.6 l-3.8 4 Z" fill="#444"/>
<linearGradient id="thv" x1="0" y1="0" x2="1" y2="0"><stop offset="0" stop-color="#fff"/><stop offset="1" stop-color="#f0f0f0"/></linearGradient>
<rect x="169.5" y="256.5" width="14" height="27" fill="url(#thv)" stroke="#b4b4b4" stroke-width="1" />
<rect x="2.5" y="445.5" width="167" height="14" fill="#e1e1e1" stroke="#b4b4b4" stroke-width="1" />
<rect x="2.5" y="445.5" width="13" height="14" fill="#fdfdfd" stroke="#b4b4b4" stroke-width="1" />
<path d="M11 448.5 v8 l-4.5 -4 Z" fill="#444"/>
<rect x="155.5" y="445.5" width="14" height="14" fill="#fdfdfd" stroke="#b4b4b4" stroke-width="1" />
<path d="M160.5 448.5 v8 l4.5 -4 Z" fill="#444"/>
<linearGradient id="thh" x1="0" y1="0" x2="0" y2="1"><stop offset="0" stop-color="#fff"/><stop offset="1" stop-color="#f0f0f0"/></linearGradient>
<rect x="28.5" y="445.5" width="38" height="14" fill="url(#thh)" stroke="#b4b4b4" stroke-width="1" />
<rect x="169.5" y="445.5" width="14" height="14" fill="#f0f0f0" stroke="#b4b4b4" stroke-width="1" />
<rect x="86" y="462" width="1" height="1" fill="#b8b8b8"/>
<rect x="187" y="462" width="1" height="1" fill="#b8b8b8"/><rect x="684" y="462" width="1" height="1" fill="#b8b8b8"/>
<rect x="89" y="462" width="1" height="1" fill="#b8b8b8"/>
<rect x="187" y="465" width="1" height="1" fill="#b8b8b8"/><rect x="684" y="465" width="1" height="1" fill="#b8b8b8"/>
<rect x="92" y="462" width="1" height="1" fill="#b8b8b8"/>
<rect x="187" y="468" width="1" height="1" fill="#b8b8b8"/><rect x="684" y="468" width="1" height="1" fill="#b8b8b8"/>
<rect x="95" y="462" width="1" height="1" fill="#b8b8b8"/>
<rect x="187" y="471" width="1" height="1" fill="#b8b8b8"/><rect x="684" y="471" width="1" height="1" fill="#b8b8b8"/>
<rect x="98" y="462" width="1" height="1" fill="#b8b8b8"/>
<rect x="187" y="474" width="1" height="1" fill="#b8b8b8"/><rect x="684" y="474" width="1" height="1" fill="#b8b8b8"/>
<rect x="101" y="462" width="1" height="1" fill="#b8b8b8"/>
<rect x="187" y="477" width="1" height="1" fill="#b8b8b8"/><rect x="684" y="477" width="1" height="1" fill="#b8b8b8"/>
<text x="5.5" y="479.8" font-size="12" fill="#000" textLength="32" lengthAdjust="spacingAndGlyphs" >Layers</text>
<rect x="157.5" y="470.5" width="10" height="10" fill="#f8f8f8" stroke="#6a6662" stroke-width="1" rx="2.2" />
<rect x="161.6" y="472.4" width="4.2" height="4.2" rx="0.8" fill="none" stroke="#5a5652" stroke-width="0.9"/><rect x="159.4" y="474.5" width="4.4" height="4.2" rx="1" fill="#fff" stroke="#5a5652" stroke-width="0.9"/>
<rect x="171.5" y="470.5" width="10" height="10" fill="#f8f8f8" stroke="#6a6662" stroke-width="1" rx="2.2" />
<path d="M173.7 472.7 l5.6 5.6 M179.3 472.7 l-5.6 5.6" stroke="#5a5652" stroke-width="1.7"/>
<g transform="translate(8.600000000000001 491.7) scale(0.6666666666666666)"><path d="M3 14 L10 8 L17 15 L11 21 Z" fill="#e04a2a"/><path d="M3 12.5 L8 8.5 L12 12.5 L7 17 Z" fill="#f5d02a"/><path d="M3 11 L6 8.5 L9 11 L5.5 14 Z" fill="#4f8ad0"/><path d="M9 14.5 L13 10 L17.5 14.5 L13 19 Z" fill="#c9a06a" stroke="#8a6a3a" stroke-width="0.6"/><path d="M14 11 L21.5 3" stroke="#c98a3a" stroke-width="2.6" stroke-linecap="round"/></g>
<g transform="translate(33.8 491.7) scale(0.6666666666666666)"><rect x="3.5" y="8.5" width="11" height="12" fill="#f4f4f4" stroke="#777" stroke-width="1"/><rect x="6.5" y="5.5" width="11" height="12" fill="#f4f4f4" stroke="#777" stroke-width="1"/><path d="M9.5 3 Q9.5 1 11.5 1 Q13.5 1 13.5 3 V13 Q13.5 14.5 12 14.5 Q10.5 14.5 10.5 13 V5" stroke="#555" stroke-width="1.1" fill="none"/><circle cx="17.5" cy="19.5" r="4" fill="#7fb37a" stroke="#5f9458" stroke-width="0.8"/><path d="M17.5 17 v5 M15 19.5 h5" stroke="#fff" stroke-width="1.3"/></g>
<g transform="translate(59.400000000000006 491.7) scale(0.6666666666666666)"><path d="M1 12 Q10 1.5 20.5 12 Q10 21.5 1 12 Z" fill="#f6f6f6" stroke="#8a8a8a" stroke-width="1"/><circle cx="11" cy="11.5" r="4.8" fill="#5b8cc9" stroke="#3f6ea8" stroke-width="0.7"/><circle cx="11" cy="11.5" r="2" fill="#1e2a3c"/><path d="M2 8.5 Q10 0.5 20 8" stroke="#a9a9a9" stroke-width="1" fill="none"/><path d="M16 20.5 h6 l-3 3.5 Z" fill="#444"/></g>
<g transform="translate(83.6 491.7) scale(0.6666666666666666)"><path d="M2 2.5 H22 L14.5 12.5 V22 L9.5 19.5 V12.5 Z" fill="#5b8cc9" stroke="#3f6ea8" stroke-width="0.8" stroke-linejoin="round"/><rect x="2" y="1.5" width="20" height="3" fill="#f5e04a" stroke="#c9a92a" stroke-width="0.7"/></g>
<g transform="translate(109.6 491.7) scale(0.6666666666666666)"><text x="1.5" y="16" font-size="29" fill="#6a1a7a" font-family="Liberation Serif,serif">ε</text><path d="M14.5 12.5 H24 L23 22.5 H15.5 Z" fill="#e9e9e9" stroke="#a9a9a9" stroke-width="0.9"/><path d="M15.5 16.5 H23 V22 H15.8 Z" fill="#9a9a9a"/></g>
<path d="M131.0 497.5 L138.0 497.5 L134.5 501.5 Z" fill="#555"/>
<g transform="translate(146.0 491.7) scale(0.6666666666666666)"><path d="M2.5 3.5 H13 M4.5 3.5 V20.5 M4.5 11 H8 M4.5 18.5 H8" stroke="#8a8a8a" stroke-width="0.8" fill="none"/><rect x="6.5" y="9" width="3.4" height="3.4" fill="#f7941d" stroke="#c96f00" stroke-width="0.5"/><rect x="6.5" y="16.5" width="3.4" height="3.4" fill="#f7941d" stroke="#c96f00" stroke-width="0.5"/><path d="M16 22 L22.8 14 H18.8 V2.5 H13.2 V14 H9.2 Z" fill="#5b8cc9" stroke="#2f5588" stroke-width="0.9" stroke-linejoin="round"/></g>
<path d="M171.2 497.3 l2.8 2.7 l-2.8 2.7 M175.2 497.3 l2.8 2.7 l-2.8 2.7" stroke="#000" stroke-width="1.35" fill="none"/>
<rect x="2.5" y="516.5" width="181" height="253" fill="#fff" stroke="#b9b9b9" stroke-width="1" />
<rect x="3" y="517" width="180" height="18" fill="#eeeeee" />
<rect x="25.5" y="519.5" width="13" height="13" fill="#fff" stroke="#b4b4b4" stroke-width="1" />
<path d="M28.3 525.6 L31.3 530 L35.5 522.2" stroke="#000" stroke-width="2" fill="none"/>
<circle cx="53" cy="526" r="3" fill="#80b278" stroke="#6a8f8a" stroke-width="0.8"/>
<text x="67" y="531" font-size="12" fill="#000" textLength="92" lengthAdjust="spacingAndGlyphs" font-weight="bold" text-decoration="underline" >ne_10m_airports</text>
<rect x="190.5" y="168.5" width="490" height="601" fill="#fff" stroke="#b4b4b4" stroke-width="1" />
<clipPath id="mapc"><rect x="191" y="169" width="489" height="599"/></clipPath><g clip-path="url(#mapc)">
<circle cx="205" cy="176" r="3.6" fill="#c1d44e" stroke="#303030" stroke-width="1"/>
<circle cx="377" cy="193" r="3.6" fill="#c1d44e" stroke="#303030" stroke-width="1"/>
<circle cx="286" cy="211" r="3.6" fill="#c1d44e" stroke="#303030" stroke-width="1"/>
<circle cx="311" cy="217" r="3.6" fill="#c1d44e" stroke="#303030" stroke-width="1"/>
<circle cx="315" cy="225" r="3.6" fill="#c1d44e" stroke="#303030" stroke-width="1"/>
<circle cx="221" cy="220" r="3.6" fill="#c1d44e" stroke="#303030" stroke-width="1"/>
<circle cx="250" cy="223" r="3.6" fill="#c1d44e" stroke="#303030" stroke-width="1"/>
<circle cx="255" cy="234" r="3.6" fill="#c1d44e" stroke="#303030" stroke-width="1"/>
<circle cx="285" cy="228" r="3.6" fill="#c1d44e" stroke="#303030" stroke-width="1"/>
<circle cx="377" cy="226" r="3.6" fill="#c1d44e" stroke="#303030" stroke-width="1"/>
<circle cx="426" cy="226" r="3.6" fill="#c1d44e" stroke="#303030" stroke-width="1"/>
<circle cx="430" cy="235" r="3.6" fill="#c1d44e" stroke="#303030" stroke-width="1"/>
<circle cx="197" cy="243" r="3.6" fill="#c1d44e" stroke="#303030" stroke-width="1"/>
<circle cx="233" cy="244" r="3.6" fill="#c1d44e" stroke="#303030" stroke-width="1"/>
<circle cx="367" cy="247" r="3.6" fill="#c1d44e" stroke="#303030" stroke-width="1"/>
<circle cx="224" cy="259" r="3.6" fill="#c1d44e" stroke="#303030" stroke-width="1"/>
<circle cx="199" cy="266" r="3.6" fill="#c1d44e" stroke="#303030" stroke-width="1"/>
<circle cx="200" cy="268" r="3.6" fill="#c1d44e" stroke="#303030" stroke-width="1"/>
<circle cx="324" cy="274" r="3.6" fill="#c1d44e" stroke="#303030" stroke-width="1"/>
<circle cx="395" cy="287" r="3.6" fill="#c1d44e" stroke="#303030" stroke-width="1"/>
<circle cx="396" cy="287" r="3.6" fill="#c1d44e" stroke="#303030" stroke-width="1"/>
<circle cx="383" cy="289" r="3.6" fill="#c1d44e" stroke="#303030" stroke-width="1"/>
<circle cx="355" cy="298" r="3.6" fill="#c1d44e" stroke="#303030" stroke-width="1"/>
<circle cx="228" cy="296" r="3.6" fill="#c1d44e" stroke="#303030" stroke-width="1"/>
<circle cx="225" cy="304" r="3.6" fill="#c1d44e" stroke="#303030" stroke-width="1"/>
<circle cx="254" cy="303" r="3.6" fill="#c1d44e" stroke="#303030" stroke-width="1"/>
<circle cx="391" cy="307" r="3.6" fill="#c1d44e" stroke="#303030" stroke-width="1"/>
<circle cx="234" cy="315" r="3.6" fill="#c1d44e" stroke="#303030" stroke-width="1"/>
<circle cx="298" cy="316" r="3.6" fill="#c1d44e" stroke="#303030" stroke-width="1"/>
<circle cx="218" cy="324" r="3.6" fill="#c1d44e" stroke="#303030" stroke-width="1"/>
<circle cx="305" cy="325" r="3.6" fill="#c1d44e" stroke="#303030" stroke-width="1"/>
<circle cx="411" cy="321" r="3.6" fill="#c1d44e" stroke="#303030" stroke-width="1"/>
<circle cx="261" cy="328" r="3.6" fill="#c1d44e" stroke="#303030" stroke-width="1"/>
<circle cx="239" cy="335" r="3.6" fill="#c1d44e" stroke="#303030" stroke-width="1"/>
<circle cx="224" cy="340" r="3.6" fill="#c1d44e" stroke="#303030" stroke-width="1"/>
<circle cx="355" cy="334" r="3.6" fill="#c1d44e" stroke="#303030" stroke-width="1"/>
<circle cx="367" cy="337" r="3.6" fill="#c1d44e" stroke="#303030" stroke-width="1"/>
<circle cx="375" cy="338" r="3.6" fill="#c1d44e" stroke="#303030" stroke-width="1"/>
<circle cx="384" cy="337" r="3.6" fill="#c1d44e" stroke="#303030" stroke-width="1"/>
<circle cx="385" cy="343" r="3.6" fill="#c1d44e" stroke="#303030" stroke-width="1"/>
<circle cx="264" cy="343" r="3.6" fill="#c1d44e" stroke="#303030" stroke-width="1"/>
<circle cx="247" cy="350" r="3.6" fill="#c1d44e" stroke="#303030" stroke-width="1"/>
<circle cx="242" cy="355" r="3.6" fill="#c1d44e" stroke="#303030" stroke-width="1"/>
<circle cx="243" cy="361" r="3.6" fill="#c1d44e" stroke="#303030" stroke-width="1"/>
<circle cx="268" cy="360" r="3.6" fill="#c1d44e" stroke="#303030" stroke-width="1"/>
<circle cx="311" cy="360" r="3.6" fill="#c1d44e" stroke="#303030" stroke-width="1"/>
<circle cx="343" cy="356" r="3.6" fill="#c1d44e" stroke="#303030" stroke-width="1"/>
<circle cx="367" cy="357" r="3.6" fill="#c1d44e" stroke="#303030" stroke-width="1"/>
<circle cx="375" cy="350" r="3.6" fill="#c1d44e" stroke="#303030" stroke-width="1"/>
<circle cx="382" cy="350" r="3.6" fill="#c1d44e" stroke="#303030" stroke-width="1"/>
<circle cx="389" cy="350" r="3.6" fill="#c1d44e" stroke="#303030" stroke-width="1"/>
<circle cx="390" cy="352" r="3.6" fill="#c1d44e" stroke="#303030" stroke-width="1"/>
<circle cx="395" cy="354" r="3.6" fill="#c1d44e" stroke="#303030" stroke-width="1"/>
<circle cx="540" cy="240" r="3.6" fill="#c1d44e" stroke="#303030" stroke-width="1"/>
<circle cx="539" cy="240" r="3.6" fill="#c1d44e" stroke="#303030" stroke-width="1"/>
<circle cx="552" cy="264" r="3.6" fill="#c1d44e" stroke="#303030" stroke-width="1"/>
<circle cx="451" cy="284" r="3.6" fill="#c1d44e" stroke="#303030" stroke-width="1"/>
<circle cx="677" cy="269" r="3.6" fill="#c1d44e" stroke="#303030" stroke-width="1"/>
<circle cx="655" cy="275" r="3.6" fill="#c1d44e" stroke="#303030" stroke-width="1"/>
<circle cx="672" cy="281" r="3.6" fill="#c1d44e" stroke="#303030" stroke-width="1"/>
<circle cx="652" cy="284" r="3.6" fill="#c1d44e" stroke="#303030" stroke-width="1"/>
<circle cx="640" cy="296" r="3.6" fill="#c1d44e" stroke="#303030" stroke-width="1"/>
<circle cx="579" cy="300" r="3.6" fill="#c1d44e" stroke="#303030" stroke-width="1"/>
<circle cx="604" cy="305" r="3.6" fill="#c1d44e" stroke="#303030" stroke-width="1"/>
<circle cx="608" cy="310" r="3.6" fill="#c1d44e" stroke="#303030" stroke-width="1"/>
<circle cx="630" cy="310" r="3.6" fill="#c1d44e" stroke="#303030" stroke-width="1"/>
<circle cx="653" cy="308" r="3.6" fill="#c1d44e" stroke="#303030" stroke-width="1"/>
<circle cx="652" cy="309" r="3.6" fill="#c1d44e" stroke="#303030" stroke-width="1"/>
<circle cx="668" cy="315" r="3.6" fill="#c1d44e" stroke="#303030" stroke-width="1"/>
<circle cx="594" cy="314" r="3.6" fill="#c1d44e" stroke="#303030" stroke-width="1"/>
<circle cx="583" cy="317" r="3.6" fill="#c1d44e" stroke="#303030" stroke-width="1"/>
<circle cx="656" cy="317" r="3.6" fill="#c1d44e" stroke="#303030" stroke-width="1"/>
<circle cx="658" cy="317" r="3.6" fill="#c1d44e" stroke="#303030" stroke-width="1"/>
<circle cx="661" cy="322" r="3.6" fill="#c1d44e" stroke="#303030" stroke-width="1"/>
<circle cx="629" cy="319" r="3.6" fill="#c1d44e" stroke="#303030" stroke-width="1"/>
<circle cx="624" cy="325" r="3.6" fill="#c1d44e" stroke="#303030" stroke-width="1"/>
<circle cx="536" cy="323" r="3.6" fill="#c1d44e" stroke="#303030" stroke-width="1"/>
<circle cx="667" cy="327" r="3.6" fill="#c1d44e" stroke="#303030" stroke-width="1"/>
<circle cx="671" cy="328" r="3.6" fill="#c1d44e" stroke="#303030" stroke-width="1"/>
<circle cx="669" cy="330" r="3.6" fill="#c1d44e" stroke="#303030" stroke-width="1"/>
<circle cx="658" cy="331" r="3.6" fill="#c1d44e" stroke="#303030" stroke-width="1"/>
<circle cx="563" cy="334" r="3.6" fill="#c1d44e" stroke="#303030" stroke-width="1"/>
<circle cx="590" cy="334" r="3.6" fill="#c1d44e" stroke="#303030" stroke-width="1"/>
<circle cx="656" cy="339" r="3.6" fill="#c1d44e" stroke="#303030" stroke-width="1"/>
<circle cx="677" cy="339" r="3.6" fill="#c1d44e" stroke="#303030" stroke-width="1"/>
<circle cx="608" cy="348" r="3.6" fill="#c1d44e" stroke="#303030" stroke-width="1"/>
<circle cx="616" cy="348" r="3.6" fill="#c1d44e" stroke="#303030" stroke-width="1"/>
<circle cx="631" cy="351" r="3.6" fill="#c1d44e" stroke="#303030" stroke-width="1"/>
<circle cx="629" cy="351" r="3.6" fill="#c1d44e" stroke="#303030" stroke-width="1"/>
<circle cx="538" cy="354" r="3.6" fill="#c1d44e" stroke="#303030" stroke-width="1"/>
<circle cx="592" cy="354" r="3.6" fill="#c1d44e" stroke="#303030" stroke-width="1"/>
<circle cx="624" cy="356" r="3.6" fill="#c1d44e" stroke="#303030" stroke-width="1"/>
<circle cx="630" cy="358" r="3.6" fill="#c1d44e" stroke="#303030" stroke-width="1"/>
<circle cx="552" cy="359" r="3.6" fill="#c1d44e" stroke="#303030" stroke-width="1"/>
<circle cx="469" cy="361" r="3.6" fill="#c1d44e" stroke="#303030" stroke-width="1"/>
<circle cx="586" cy="367" r="3.6" fill="#c1d44e" stroke="#303030" stroke-width="1"/>
<circle cx="601" cy="364" r="3.6" fill="#c1d44e" stroke="#303030" stroke-width="1"/>
<circle cx="398" cy="364" r="3.6" fill="#c1d44e" stroke="#303030" stroke-width="1"/>
<circle cx="396" cy="365" r="3.6" fill="#c1d44e" stroke="#303030" stroke-width="1"/>
<circle cx="409" cy="366" r="3.6" fill="#c1d44e" stroke="#303030" stroke-width="1"/>
<circle cx="287" cy="372" r="3.6" fill="#c1d44e" stroke="#303030" stroke-width="1"/>
<circle cx="390" cy="374" r="3.6" fill="#c1d44e" stroke="#303030" stroke-width="1"/>
<circle cx="401" cy="372" r="3.6" fill="#c1d44e" stroke="#303030" stroke-width="1"/>
<circle cx="402" cy="377" r="3.6" fill="#c1d44e" stroke="#303030" stroke-width="1"/>
<circle cx="375" cy="377" r="3.6" fill="#c1d44e" stroke="#303030" stroke-width="1"/>
<circle cx="414" cy="376" r="3.6" fill="#c1d44e" stroke="#303030" stroke-width="1"/>
<circle cx="416" cy="375" r="3.6" fill="#c1d44e" stroke="#303030" stroke-width="1"/>
<circle cx="421" cy="381" r="3.6" fill="#c1d44e" stroke="#303030" stroke-width="1"/>
<circle cx="427" cy="381" r="3.6" fill="#c1d44e" stroke="#303030" stroke-width="1"/>
<circle cx="254" cy="377" r="3.6" fill="#c1d44e" stroke="#303030" stroke-width="1"/>
<circle cx="257" cy="377" r="3.6" fill="#c1d44e" stroke="#303030" stroke-width="1"/>
<circle cx="262" cy="382" r="3.6" fill="#c1d44e" stroke="#303030" stroke-width="1"/>
<circle cx="237" cy="384" r="3.6" fill="#c1d44e" stroke="#303030" stroke-width="1"/>
<circle cx="283" cy="381" r="3.6" fill="#c1d44e" stroke="#303030" stroke-width="1"/>
<circle cx="282" cy="382" r="3.6" fill="#c1d44e" stroke="#303030" stroke-width="1"/>
<circle cx="278" cy="387" r="3.6" fill="#c1d44e" stroke="#303030" stroke-width="1"/>
<circle cx="322" cy="379" r="3.6" fill="#c1d44e" stroke="#303030" stroke-width="1"/>
<circle cx="344" cy="384" r="3.6" fill="#c1d44e" stroke="#303030" stroke-width="1"/>
<circle cx="298" cy="391" r="3.6" fill="#c1d44e" stroke="#303030" stroke-width="1"/>
<circle cx="200" cy="386" r="3.6" fill="#c1d44e" stroke="#303030" stroke-width="1"/>
<circle cx="390" cy="383" r="3.6" fill="#c1d44e" stroke="#303030" stroke-width="1"/>
<circle cx="197" cy="401" r="3.6" fill="#c1d44e" stroke="#303030" stroke-width="1"/>
<circle cx="373" cy="394" r="3.6" fill="#c1d44e" stroke="#303030" stroke-width="1"/>
<circle cx="376" cy="398" r="3.6" fill="#c1d44e" stroke="#303030" stroke-width="1"/>
<circle cx="363" cy="398" r="3.6" fill="#c1d44e" stroke="#303030" stroke-width="1"/>
<circle cx="390" cy="396" r="3.6" fill="#c1d44e" stroke="#303030" stroke-width="1"/>
<circle cx="398" cy="393" r="3.6" fill="#c1d44e" stroke="#303030" stroke-width="1"/>
<circle cx="412" cy="393" r="3.6" fill="#c1d44e" stroke="#303030" stroke-width="1"/>
<circle cx="374" cy="404" r="3.6" fill="#c1d44e" stroke="#303030" stroke-width="1"/>
<circle cx="407" cy="404" r="3.6" fill="#c1d44e" stroke="#303030" stroke-width="1"/>
<circle cx="421" cy="404" r="3.6" fill="#c1d44e" stroke="#303030" stroke-width="1"/>
<circle cx="379" cy="410" r="3.6" fill="#c1d44e" stroke="#303030" stroke-width="1"/>
<circle cx="388" cy="411" r="3.6" fill="#c1d44e" stroke="#303030" stroke-width="1"/>
<circle cx="374" cy="415" r="3.6" fill="#c1d44e" stroke="#303030" stroke-width="1"/>
<circle cx="380" cy="418" r="3.6" fill="#c1d44e" stroke="#303030" stroke-width="1"/>
<circle cx="390" cy="423" r="3.6" fill="#c1d44e" stroke="#303030" stroke-width="1"/>
<circle cx="403" cy="425" r="3.6" fill="#c1d44e" stroke="#303030" stroke-width="1"/>
<circle cx="416" cy="428" r="3.6" fill="#c1d44e" stroke="#303030" stroke-width="1"/>
<circle cx="429" cy="422" r="3.6" fill="#c1d44e" stroke="#303030" stroke-width="1"/>
<circle cx="386" cy="435" r="3.6" fill="#c1d44e" stroke="#303030" stroke-width="1"/>
<circle cx="196" cy="435" r="3.6" fill="#c1d44e" stroke="#303030" stroke-width="1"/>
<circle cx="224" cy="434" r="3.6" fill="#c1d44e" stroke="#303030" stroke-width="1"/>
<circle cx="217" cy="438" r="3.6" fill="#c1d44e" stroke="#303030" stroke-width="1"/>
<circle cx="223" cy="443" r="3.6" fill="#c1d44e" stroke="#303030" stroke-width="1"/>
<circle cx="228" cy="448" r="3.6" fill="#c1d44e" stroke="#303030" stroke-width="1"/>
<circle cx="218" cy="455" r="3.6" fill="#c1d44e" stroke="#303030" stroke-width="1"/>
<circle cx="211" cy="465" r="3.6" fill="#c1d44e" stroke="#303030" stroke-width="1"/>
<circle cx="195" cy="468" r="3.6" fill="#c1d44e" stroke="#303030" stroke-width="1"/>
<circle cx="400" cy="446" r="3.6" fill="#c1d44e" stroke="#303030" stroke-width="1"/>
<circle cx="413" cy="447" r="3.6" fill="#c1d44e" stroke="#303030" stroke-width="1"/>
<circle cx="390" cy="457" r="3.6" fill="#c1d44e" stroke="#303030" stroke-width="1"/>
<circle cx="396" cy="457" r="3.6" fill="#c1d44e" stroke="#303030" stroke-width="1"/>
<circle cx="405" cy="459" r="3.6" fill="#c1d44e" stroke="#303030" stroke-width="1"/>
<circle cx="393" cy="462" r="3.6" fill="#c1d44e" stroke="#303030" stroke-width="1"/>
<circle cx="402" cy="464" r="3.6" fill="#c1d44e" stroke="#303030" stroke-width="1"/>
<circle cx="396" cy="471" r="3.6" fill="#c1d44e" stroke="#303030" stroke-width="1"/>
<circle cx="411" cy="478" r="3.6" fill="#c1d44e" stroke="#303030" stroke-width="1"/>
<circle cx="378" cy="493" r="3.6" fill="#c1d44e" stroke="#303030" stroke-width="1"/>
<circle cx="229" cy="505" r="3.6" fill="#c1d44e" stroke="#303030" stroke-width="1"/>
<circle cx="199" cy="536" r="3.6" fill="#c1d44e" stroke="#303030" stroke-width="1"/>
<circle cx="283" cy="540" r="3.6" fill="#c1d44e" stroke="#303030" stroke-width="1"/>
<circle cx="197" cy="551" r="3.6" fill="#c1d44e" stroke="#303030" stroke-width="1"/>
<circle cx="197" cy="548" r="3.6" fill="#c1d44e" stroke="#303030" stroke-width="1"/>
<circle cx="440" cy="370" r="3.6" fill="#c1d44e" stroke="#303030" stroke-width="1"/>
<circle cx="438" cy="381" r="3.6" fill="#c1d44e" stroke="#303030" stroke-width="1"/>
<circle cx="473" cy="378" r="3.6" fill="#c1d44e" stroke="#303030" stroke-width="1"/>
<circle cx="457" cy="387" r="3.6" fill="#c1d44e" stroke="#303030" stroke-width="1"/>
<circle cx="448" cy="391" r="3.6" fill="#c1d44e" stroke="#303030" stroke-width="1"/>
<circle cx="440" cy="393" r="3.6" fill="#c1d44e" stroke="#303030" stroke-width="1"/>
<circle cx="444" cy="395" r="3.6" fill="#c1d44e" stroke="#303030" stroke-width="1"/>
<circle cx="466" cy="390" r="3.6" fill="#c1d44e" stroke="#303030" stroke-width="1"/>
<circle cx="456" cy="396" r="3.6" fill="#c1d44e" stroke="#303030" stroke-width="1"/>
<circle cx="474" cy="398" r="3.6" fill="#c1d44e" stroke="#303030" stroke-width="1"/>
<circle cx="442" cy="409" r="3.6" fill="#c1d44e" stroke="#303030" stroke-width="1"/>
<circle cx="496" cy="401" r="3.6" fill="#c1d44e" stroke="#303030" stroke-width="1"/>
<circle cx="531" cy="384" r="3.6" fill="#c1d44e" stroke="#303030" stroke-width="1"/>
<circle cx="570" cy="383" r="3.6" fill="#c1d44e" stroke="#303030" stroke-width="1"/>
<circle cx="560" cy="396" r="3.6" fill="#c1d44e" stroke="#303030" stroke-width="1"/>
<circle cx="547" cy="404" r="3.6" fill="#c1d44e" stroke="#303030" stroke-width="1"/>
<circle cx="587" cy="392" r="3.6" fill="#c1d44e" stroke="#303030" stroke-width="1"/>
<circle cx="588" cy="399" r="3.6" fill="#c1d44e" stroke="#303030" stroke-width="1"/>
<circle cx="590" cy="398" r="3.6" fill="#c1d44e" stroke="#303030" stroke-width="1"/>
<circle cx="612" cy="386" r="3.6" fill="#c1d44e" stroke="#303030" stroke-width="1"/>
<circle cx="620" cy="379" r="3.6" fill="#c1d44e" stroke="#303030" stroke-width="1"/>
<circle cx="628" cy="383" r="3.6" fill="#c1d44e" stroke="#303030" stroke-width="1"/>
<circle cx="625" cy="388" r="3.6" fill="#c1d44e" stroke="#303030" stroke-width="1"/>
<circle cx="623" cy="394" r="3.6" fill="#c1d44e" stroke="#303030" stroke-width="1"/>
<circle cx="624" cy="397" r="3.6" fill="#c1d44e" stroke="#303030" stroke-width="1"/>
<circle cx="511" cy="417" r="3.6" fill="#c1d44e" stroke="#303030" stroke-width="1"/>
<circle cx="497" cy="426" r="3.6" fill="#c1d44e" stroke="#303030" stroke-width="1"/>
<circle cx="530" cy="421" r="3.6" fill="#c1d44e" stroke="#303030" stroke-width="1"/>
<circle cx="566" cy="419" r="3.6" fill="#c1d44e" stroke="#303030" stroke-width="1"/>
<circle cx="560" cy="431" r="3.6" fill="#c1d44e" stroke="#303030" stroke-width="1"/>
<circle cx="625" cy="420" r="3.6" fill="#c1d44e" stroke="#303030" stroke-width="1"/>
<circle cx="625" cy="435" r="3.6" fill="#c1d44e" stroke="#303030" stroke-width="1"/>
<circle cx="627" cy="439" r="3.6" fill="#c1d44e" stroke="#303030" stroke-width="1"/>
<circle cx="520" cy="442" r="3.6" fill="#c1d44e" stroke="#303030" stroke-width="1"/>
<circle cx="522" cy="449" r="3.6" fill="#c1d44e" stroke="#303030" stroke-width="1"/>
<circle cx="537" cy="445" r="3.6" fill="#c1d44e" stroke="#303030" stroke-width="1"/>
<circle cx="542" cy="455" r="3.6" fill="#c1d44e" stroke="#303030" stroke-width="1"/>
<circle cx="552" cy="458" r="3.6" fill="#c1d44e" stroke="#303030" stroke-width="1"/>
<circle cx="643" cy="461" r="3.6" fill="#c1d44e" stroke="#303030" stroke-width="1"/>
<circle cx="508" cy="473" r="3.6" fill="#c1d44e" stroke="#303030" stroke-width="1"/>
<circle cx="519" cy="479" r="3.6" fill="#c1d44e" stroke="#303030" stroke-width="1"/>
<circle cx="518" cy="487" r="3.6" fill="#c1d44e" stroke="#303030" stroke-width="1"/>
<circle cx="633" cy="479" r="3.6" fill="#c1d44e" stroke="#303030" stroke-width="1"/>
<circle cx="652" cy="478" r="3.6" fill="#c1d44e" stroke="#303030" stroke-width="1"/>
<circle cx="601" cy="484" r="3.6" fill="#c1d44e" stroke="#303030" stroke-width="1"/>
<circle cx="595" cy="489" r="3.6" fill="#c1d44e" stroke="#303030" stroke-width="1"/>
<circle cx="510" cy="497" r="3.6" fill="#c1d44e" stroke="#303030" stroke-width="1"/>
<circle cx="526" cy="501" r="3.6" fill="#c1d44e" stroke="#303030" stroke-width="1"/>
<circle cx="571" cy="507" r="3.6" fill="#c1d44e" stroke="#303030" stroke-width="1"/>
<circle cx="524" cy="513" r="3.6" fill="#c1d44e" stroke="#303030" stroke-width="1"/>
<circle cx="518" cy="519" r="3.6" fill="#c1d44e" stroke="#303030" stroke-width="1"/>
<circle cx="542" cy="531" r="3.6" fill="#c1d44e" stroke="#303030" stroke-width="1"/>
<circle cx="544" cy="543" r="3.6" fill="#c1d44e" stroke="#303030" stroke-width="1"/>
<circle cx="552" cy="547" r="3.6" fill="#c1d44e" stroke="#303030" stroke-width="1"/>
<circle cx="557" cy="552" r="3.6" fill="#c1d44e" stroke="#303030" stroke-width="1"/>
<circle cx="571" cy="552" r="3.6" fill="#c1d44e" stroke="#303030" stroke-width="1"/>
<circle cx="620" cy="542" r="3.6" fill="#c1d44e" stroke="#303030" stroke-width="1"/>
<circle cx="219" cy="576" r="3.6" fill="#c1d44e" stroke="#303030" stroke-width="1"/>
<circle cx="229" cy="583" r="3.6" fill="#c1d44e" stroke="#303030" stroke-width="1"/>
<circle cx="241" cy="614" r="3.6" fill="#c1d44e" stroke="#303030" stroke-width="1"/>
<circle cx="294" cy="623" r="3.6" fill="#c1d44e" stroke="#303030" stroke-width="1"/>
<circle cx="584" cy="557" r="3.6" fill="#c1d44e" stroke="#303030" stroke-width="1"/>
<circle cx="584" cy="554" r="3.6" fill="#c1d44e" stroke="#303030" stroke-width="1"/>
<circle cx="597" cy="561" r="3.6" fill="#c1d44e" stroke="#303030" stroke-width="1"/>
<circle cx="651" cy="560" r="3.6" fill="#c1d44e" stroke="#303030" stroke-width="1"/>
<circle cx="500" cy="579" r="3.6" fill="#c1d44e" stroke="#303030" stroke-width="1"/>
<circle cx="678" cy="580" r="3.6" fill="#c1d44e" stroke="#303030" stroke-width="1"/>
<circle cx="634" cy="610" r="3.6" fill="#c1d44e" stroke="#303030" stroke-width="1"/>
<circle cx="615" cy="622" r="3.6" fill="#c1d44e" stroke="#303030" stroke-width="1"/>
<circle cx="601" cy="683" r="3.6" fill="#c1d44e" stroke="#303030" stroke-width="1"/>
<circle cx="538.00" cy="508.00" r="5.6" fill="#ff0000"/><circle cx="538.00" cy="508.00" r="2" fill="#dc6c2e"/>
</g>
<text x="691" y="182" font-size="12" fill="#000" textLength="80" lengthAdjust="spacingAndGlyphs" >Identify Results</text>
<rect x="1015.5" y="172.5" width="10" height="10" fill="#f8f8f8" stroke="#6a6662" stroke-width="1" rx="2.2" />
<rect x="1019.6" y="174.4" width="4.2" height="4.2" rx="0.8" fill="none" stroke="#5a5652" stroke-width="0.9"/><rect x="1017.4" y="176.5" width="4.4" height="4.2" rx="1" fill="#fff" stroke="#5a5652" stroke-width="0.9"/>
<rect x="1029.5" y="172.5" width="10" height="10" fill="#f8f8f8" stroke="#6a6662" stroke-width="1" rx="2.2" />
<path d="M1031.7 174.7 l5.6 5.6 M1037.3 174.7 l-5.6 5.6" stroke="#5a5652" stroke-width="1.7"/>
<rect x="696.5" y="195.0" width="13.5" height="13.5" fill="#e2ebf6" stroke="#a9c0dc" stroke-width="1" rx="2" />
<path d="M698.5 198.5 h3 M698.5 205 h3" stroke="#6a98cf" stroke-width="1.4"/><rect x="702" y="196.7" width="6" height="3.6" rx="1" fill="#fff" stroke="#9ab4d6" stroke-width="0.8"/><rect x="702" y="203.2" width="6" height="3.6" rx="1" fill="#fff" stroke="#9ab4d6" stroke-width="0.8"/>
<rect x="719" y="194" width="1" height="16" fill="#c9c9c9"/>
<g transform="translate(727.7 193.5) scale(0.6666666666666666)"><path d="M2.5 3.5 H13 M4.5 3.5 V20.5 M4.5 11 H8 M4.5 18.5 H8" stroke="#8a8a8a" stroke-width="0.8" fill="none"/><rect x="6.5" y="9" width="3.4" height="3.4" fill="#f7941d" stroke="#c96f00" stroke-width="0.5"/><rect x="6.5" y="16.5" width="3.4" height="3.4" fill="#f7941d" stroke="#c96f00" stroke-width="0.5"/><path d="M16 22 L22.8 14 H18.8 V2.5 H13.2 V14 H9.2 Z" fill="#5b8cc9" stroke="#2f5588" stroke-width="0.9" stroke-linejoin="round"/></g>
<g transform="translate(752.7 193.5) scale(0.6666666666666666)"><path d="M2.5 3.5 H13 M4.5 3.5 V20.5 M4.5 11 H8 M4.5 18.5 H8" stroke="#8a8a8a" stroke-width="0.8" fill="none"/><rect x="6.5" y="9" width="3.4" height="3.4" fill="#f7941d" stroke="#c96f00" stroke-width="0.5"/><rect x="6.5" y="16.5" width="3.4" height="3.4" fill="#f7941d" stroke="#c96f00" stroke-width="0.5"/><path d="M16 1.5 L22.8 9.5 H18.8 V21.5 H13.2 V9.5 H9.2 Z" fill="#5b8cc9" stroke="#2f5588" stroke-width="0.9" stroke-linejoin="round"/></g>
<g transform="translate(777.5 193.5) scale(0.6666666666666666)"><path d="M2.5 3.5 H13 M4.5 3.5 V20.5 M4.5 11 H8 M4.5 18.5 H8" stroke="#8a8a8a" stroke-width="0.8" fill="none"/><rect x="6.5" y="9" width="3.4" height="3.4" fill="#f7941d" stroke="#c96f00" stroke-width="0.5"/><rect x="6.5" y="16.5" width="3.4" height="3.4" fill="#f7941d" stroke="#c96f00" stroke-width="0.5"/><path d="M16 22 L22.8 14 H18.8 V2.5 H13.2 V14 H9.2 Z" fill="#5b8cc9" stroke="#2f5588" stroke-width="0.9" stroke-linejoin="round"/><path d="M7 0.5 L8.9 4.8 L13.5 5.2 L10 8.3 L11.1 12.8 L7 10.4 L2.9 12.8 L4 8.3 L0.5 5.2 L5.1 4.8 Z" fill="#f9d21a" stroke="#d98a00" stroke-width="0.7"/></g>
<rect x="802" y="194" width="1" height="16" fill="#c9c9c9"/>
<g transform="translate(809.5 193.5) scale(0.6666666666666666)"><rect x="1.5" y="1.5" width="12" height="12" rx="1.5" fill="#f5d94a" stroke="#c9a92a" stroke-width="0.9"/><rect x="6.5" y="7" width="12" height="12" rx="1.5" fill="#f5d94a" stroke="#c9a92a" stroke-width="0.9"/><rect x="13.5" y="13.5" width="9" height="9" rx="1.8" fill="#fff" stroke="#d02020" stroke-width="1"/><circle cx="18" cy="18" r="2.6" fill="none" stroke="#d02020" stroke-width="1.1"/><path d="M16.2 19.8 l3.6 -3.6" stroke="#d02020" stroke-width="1.1"/></g>
<rect x="834" y="194" width="1" height="16" fill="#c9c9c9"/>
<g transform="translate(840.5 193.5) scale(0.6666666666666666)"><g opacity="0.75"><path d="M9 1.5 h7 l3.5 3.5 v12 h-10.5 Z" fill="#f0f0f0" stroke="#9a9a9a" stroke-width="0.9"/><path d="M16 1.5 v3.5 h3.5" fill="none" stroke="#9a9a9a" stroke-width="0.8"/><path d="M11 8.0 h6 M11 10.5 h6 M11 13.0 h6" stroke="#9a9a9a" stroke-width="0.7"/><path d="M4.3 6 h7 l3.5 3.5 v12 h-10.5 Z" fill="#f0f0f0" stroke="#9a9a9a" stroke-width="0.9"/><path d="M11.3 6 v3.5 h3.5" fill="none" stroke="#9a9a9a" stroke-width="0.8"/><path d="M6.3 12.5 h6 M6.3 15 h6 M6.3 17.5 h6" stroke="#9a9a9a" stroke-width="0.7"/></g></g>
<g transform="translate(866.0 193.5) scale(0.6666666666666666)"><g opacity="0.6"><rect x="6" y="2" width="12" height="7" fill="#eee" stroke="#c4c4c4"/><rect x="1.5" y="8" width="21" height="9" rx="2" fill="#cfcfcf"/><rect x="6" y="14" width="12" height="7.5" fill="#f4f4f4" stroke="#c9c9c9"/></g></g>
<rect x="891" y="194" width="1" height="16" fill="#c9c9c9"/>
<g transform="translate(898.0 193.5) scale(0.6666666666666666)"><rect x="1.5" y="3.5" width="19" height="17" fill="#e4e4e4" stroke="#444" stroke-width="1" stroke-dasharray="2 1.5"/><circle cx="7.5" cy="8" r="5.8" fill="#5b8cc9" stroke="#3f6ea8" stroke-width="0.6"/><text x="5.8" y="12" font-size="10" font-weight="bold" font-style="italic" font-family="Liberation Serif,serif" fill="#fff">i</text><g transform="translate(11.5 10)"><path d="M0 0 L0 13.2 L3.1 10.4 L5.4 15.4 L7.6 14.4 L5.3 9.6 L9.4 9.4 Z" fill="#fff" stroke="#333" stroke-width="1" stroke-linejoin="round" transform="rotate(-24) scale(0.9)"/></g></g>
<path d="M919.5 200.25 L927.5 200.25 L923.5 204.75 Z" fill="#444"/>
<g transform="translate(935.5 193.5) scale(0.6666666666666666)"><path d="M8 8 L21 21.5" stroke="#555" stroke-width="4.4" stroke-linecap="round"/><path d="M9 9 L20.5 21" stroke="#f2c230" stroke-width="2.8" stroke-linecap="round"/><path d="M19.5 20 L21.3 21.8" stroke="#333" stroke-width="3" stroke-linecap="round"/><circle cx="6.6" cy="6.2" r="4.6" fill="#f4f4f4" stroke="#666" stroke-width="1.1"/><path d="M6.4 6 L2.2 1.8" stroke="#f0f0f0" stroke-width="3.6"/><path d="M7.6 4.6 L4.2 1.2 M5 7.2 L1.6 3.8 M7.6 4.6 L5 7.2" stroke="#666" stroke-width="1"/></g>
<rect x="687.5" y="218.5" width="354" height="484" fill="#fff" stroke="#b4b4b4" stroke-width="1" />
<linearGradient id="hdr" x1="0" y1="0" x2="0" y2="1"><stop offset="0" stop-color="#fff"/><stop offset="1" stop-color="#f0f0f0"/></linearGradient>
<rect x="688" y="219" width="353" height="18" fill="url(#hdr)" />
<rect x="688" y="237" width="353" height="1" fill="#c4c4c4"/>
<rect x="925" y="219" width="1" height="18" fill="#c9c9c9"/>
<text x="690.5" y="233" font-size="12" fill="#000" textLength="38.5" lengthAdjust="spacingAndGlyphs" >Feature</text>
<text x="928" y="233" font-size="12" fill="#000" textLength="28" lengthAdjust="spacingAndGlyphs" >Value</text>
<rect x="688" y="253" width="353" height="15" fill="#0078d7" />
<rect x="728" y="254" width="313" height="13" fill="#1883dc" />
<rect x="688" y="283" width="353" height="15" fill="#e9e9e9" />
<rect x="688" y="313" width="353" height="15" fill="#e9e9e9" />
<rect x="688" y="343" width="353" height="15" fill="#e9e9e9" />
<path d="M694 243.5 h8 l-4 4.5 Z" fill="#444"/>
<text x="711" y="250" font-size="12" fill="#000" textLength="92" lengthAdjust="spacingAndGlyphs" font-weight="bold" >ne_10m_airports</text>
<path d="M714 258.3 h7.8 l-3.9 3.9 Z" fill="#003a6a"/>
<text x="731.5" y="265" font-size="12" fill="#fff" textLength="29.5" lengthAdjust="spacingAndGlyphs" >name</text>
<text x="929.5" y="265" font-size="12" fill="#fff" textLength="93.5" lengthAdjust="spacingAndGlyphs" >Singapore Changi</text>
<path d="M736 271.5 l4 4 l-4 4 Z" fill="#444"/><path d="M736 286.5 l4 4 l-4 4 Z" fill="#444"/>
<text x="751.4" y="280" font-size="12" fill="#000" textLength="47.3" lengthAdjust="spacingAndGlyphs" >(Derived)</text>
<text x="751.4" y="295" font-size="12" fill="#000" textLength="47.3" lengthAdjust="spacingAndGlyphs" >(Actions)</text>
<text x="751.4" y="310" font-size="12" fill="#000" textLength="22.6" lengthAdjust="spacingAndGlyphs" >type</text>
<text x="929.5" y="310" font-size="12" fill="#000" textLength="30.5" lengthAdjust="spacingAndGlyphs" >major</text>
<text x="751.4" y="325" font-size="12" fill="#000" textLength="29.6" lengthAdjust="spacingAndGlyphs" >name</text>
<text x="929.5" y="325" font-size="12" fill="#000" textLength="93.5" lengthAdjust="spacingAndGlyphs" >Singapore Changi</text>
<text x="751.4" y="340" font-size="12" fill="#000" textLength="49.4" lengthAdjust="spacingAndGlyphs" >iata_code</text>
<text x="929.5" y="340" font-size="12" fill="#000" textLength="17" lengthAdjust="spacingAndGlyphs" >SIN</text>
<text x="751.4" y="355" font-size="12" fill="#000" textLength="49.4" lengthAdjust="spacingAndGlyphs" >wikipedia</text>
<clipPath id="vc"><rect x="926" y="238" width="115" height="130"/></clipPath><g clip-path="url(#vc)">
<text x="926.5" y="355" font-size="12" fill="#0000ee" textLength="300" lengthAdjust="spacingAndGlyphs" text-decoration="underline" >http://en.wikipedia.org/wiki/Singapore_Changi_Airport</text>
</g>
<text x="691.5" y="725" font-size="12" fill="#000" textLength="25.5" lengthAdjust="spacingAndGlyphs" >Mode</text>
<linearGradient id="btn" x1="0" y1="0" x2="0" y2="1"><stop offset="0" stop-color="#fefefe"/><stop offset="1" stop-color="#ededed"/></linearGradient>
<rect x="724.5" y="708.5" width="312" height="23" fill="url(#btn)" stroke="#b4b4b4" stroke-width="1" rx="3" />
<text x="728.5" y="724.8" font-size="12" fill="#000" textLength="66.5" lengthAdjust="spacingAndGlyphs" >Current Layer</text>
<path d="M1021.75 718.5 L1029.25 718.5 L1025.5 722.5 Z" fill="#444"/>
<text x="691.5" y="756" font-size="12" fill="#8a8a8a" textLength="22.3" lengthAdjust="spacingAndGlyphs" >View</text>
<linearGradient id="btn" x1="0" y1="0" x2="0" y2="1"><stop offset="0" stop-color="#fefefe"/><stop offset="1" stop-color="#ededed"/></linearGradient>
<rect x="720.5" y="740.5" width="71" height="21" fill="url(#btn)" stroke="#c9c9c9" stroke-width="1" rx="3" />
<text x="724.5" y="755.8" font-size="12" fill="#8a8a8a" textLength="21" lengthAdjust="spacingAndGlyphs" >Tree</text>
<path d="M776.75 749.5 L784.25 749.5 L780.5 753.5 Z" fill="#a9a9a9"/>
<rect x="1002.5" y="741.5" width="34" height="19" fill="url(#btn)" stroke="#b4b4b4" stroke-width="1" rx="3" />
<text x="1008.6" y="756" font-size="12" fill="#000" textLength="21" lengthAdjust="spacingAndGlyphs" >Help</text>
<rect x="5.5" y="773.5" width="199" height="21" fill="#fff" stroke="#b4b4b4" stroke-width="1" rx="3" />
<circle cx="18.5" cy="782.5" r="3.9" fill="none" stroke="#8a8a8a" stroke-width="1.3"/><path d="M21.3 785.5 l3.6 3.8" stroke="#8a8a8a" stroke-width="1.5"/>
<text x="33" y="789" font-size="12" fill="#8a8a8a" textLength="111.5" lengthAdjust="spacingAndGlyphs" >Type to locate (Ctrl+K)</text>
<text x="250.8" y="789" font-size="12" fill="#000" textLength="52" lengthAdjust="spacingAndGlyphs" >Coordinate</text>
<rect x="307.5" y="773.5" width="66" height="21" fill="#fff" stroke="#b4b4b4" stroke-width="1" rx="3" />
<text x="314.8" y="788.7" font-size="12" fill="#000" textLength="51" lengthAdjust="spacingAndGlyphs" >127.4,-9.3</text>
<g transform="translate(386 783.5) rotate(-35)"><ellipse cx="0" cy="0.5" rx="5" ry="7.2" fill="#4a4a4a"/><path d="M-4.2 -2.5 H4.2 M0 -6.5 V-2.5" stroke="#e4e4e4" stroke-width="1"/><ellipse cx="0" cy="3.2" rx="2.6" ry="2.2" fill="#d9d9d9"/><circle cx="0" cy="3.2" r="0.9" fill="#444"/><path d="M0 -7 Q1 -10 4 -10.5" stroke="#555" stroke-width="0.9" fill="none" stroke-dasharray="1.5 1"/></g>
<text x="406.3" y="789" font-size="12" fill="#000" textLength="24.5" lengthAdjust="spacingAndGlyphs" >Scale</text>
<rect x="435.5" y="773.5" width="80" height="21" fill="#fff" stroke="#b4b4b4" stroke-width="1" rx="3" />
<clipPath id="scl"><rect x="437" y="774" width="58" height="20"/></clipPath><g clip-path="url(#scl)">
<text x="433.8" y="789" font-size="12" fill="#000" textLength="59" lengthAdjust="spacingAndGlyphs" >1:71744296</text>
</g>
<rect x="496.5" y="774" width="18.5" height="20" fill="url(#btn)" />
<rect x="496" y="774.5" width="1" height="19.0" fill="#c4c4c4"/>
<path d="M501.05 782.5 L508.55 782.5 L504.8 786.5 Z" fill="#444"/>
<path d="M530.8 783 v-3 q0 -3.3 3.2 -3.3 q3.2 0 3.2 3.3 v3" stroke="#9a9a9a" stroke-width="1.7" fill="none"/><rect x="528.3" y="782.5" width="11.4" height="8.5" rx="1" fill="#6e6e6e"/>
<text x="548.4" y="789" font-size="12" fill="#000" textLength="43.4" lengthAdjust="spacingAndGlyphs" >Magnifier</text>
<rect x="596.5" y="773.5" width="87" height="21" fill="#fff" stroke="#b4b4b4" stroke-width="1" rx="2.5" />
<rect x="670" y="774" width="1" height="20" fill="#c9c9c9"/>
<path d="M673.2 782.2 h7.6 l-3.8 -3.8 Z M673.2 786.2 h7.6 l-3.8 3.8 Z" fill="#6e6e6e"/>
<text x="601" y="789.0" font-size="12" fill="#000" textLength="27.5" lengthAdjust="spacingAndGlyphs" >100%</text>
<text x="692" y="789" font-size="12" fill="#000" textLength="41" lengthAdjust="spacingAndGlyphs" >Rotation</text>
<rect x="743.5" y="773.5" width="83" height="21" fill="#fff" stroke="#b4b4b4" stroke-width="1" rx="2.5" />
<rect x="813" y="774" width="1" height="20" fill="#c9c9c9"/>
<path d="M816.2 782.2 h7.6 l-3.8 -3.8 Z M816.2 786.2 h7.6 l-3.8 3.8 Z" fill="#6e6e6e"/>
<text x="748" y="789.0" font-size="12" fill="#000" textLength="24.5" lengthAdjust="spacingAndGlyphs" >0.0 °</text>
<rect x="833.5" y="777.5" width="13" height="13" fill="#fff" stroke="#b4b4b4" stroke-width="1" />
<path d="M836.3 783.6 L839.3 788 L843.5 780.2" stroke="#000" stroke-width="2" fill="none"/>
<text x="851.6" y="789" font-size="12" fill="#000" textLength="34" lengthAdjust="spacingAndGlyphs" >Render</text>
<g stroke="#6e6e6e" stroke-width="1" fill="none"><path d="M912 776.8 L918.2 780.2 L919.6 784.5 L916.5 790.3 H907.5 L904.4 784.5 L905.8 780.2 Z" fill="#e0e0e0"/><path d="M905.8 780.2 H918.2 M904.4 784.5 H919.6 M906 787.5 H918 M912 776.8 V790.3 M908.6 778.6 Q907 784 909 790.3 M915.4 778.6 Q917 784 915 790.3"/></g>
<text x="923.3" y="789" font-size="12" fill="#000" textLength="53" lengthAdjust="spacingAndGlyphs" >EPSG:4326</text>
<ellipse cx="1004" cy="783.5" rx="8" ry="6" fill="#6a6a6a"/><path d="M1004 788.5 Q1007 789.5 1011.5 792 Q1008.5 788.5 1009.5 786 Z" fill="#6a6a6a"/><circle cx="1000.3" cy="783.5" r="1.15" fill="#fff"/><circle cx="1004" cy="783.5" r="1.15" fill="#fff"/><circle cx="1007.7" cy="783.5" r="1.15" fill="#fff"/>
<rect x="1039" y="787" width="1" height="1" fill="#bdbdbd"/>
<rect x="1039" y="790" width="1" height="1" fill="#bdbdbd"/>
<rect x="1036" y="790" width="1" height="1" fill="#bdbdbd"/>
<rect x="1039" y="792" width="1" height="1" fill="#bdbdbd"/>
<rect x="1036" y="792" width="1" height="1" fill="#bdbdbd"/>
<rect x="1034" y="792" width="1" height="1" fill="#bdbdbd"/>
<rect x="1039" y="795" width="1" height="1" fill="#bdbdbd"/>
<rect x="1036" y="795" width="1" height="1" fill="#bdbdbd"/>
<rect x="1034" y="795" width="1" height="1" fill="#bdbdbd"/>
<rect x="1031" y="795" width="1" height="1" fill="#bdbdbd"/>
<circle cx="853.1" cy="71.4" r="20.8" fill="none" stroke="#f00808" stroke-width="4.4"/>
<filter id="blur" x="-20%" y="-20%" width="140%" height="140%"><feGaussianBlur stdDeviation="1.6"/></filter><rect x="866" y="91" width="66.5" height="34" fill="#000" opacity="0.5" filter="url(#blur)"/>
<rect x="863.5" y="87.5" width="66" height="34.5" fill="#ffffe1" stroke="#1a1a1a" stroke-width="1" />
<text x="868" y="102" font-size="12" fill="#000" textLength="58" lengthAdjust="spacingAndGlyphs" font-weight="bold" >Open Field</text>
<text x="868" y="117" font-size="12" fill="#000" textLength="54" lengthAdjust="spacingAndGlyphs" font-weight="bold" >Calculator</text>
<g transform="translate(860.5 79.5)"><path d="M0 0 L0 16.5 L3.8 12.8 L6.6 19.2 L9 18.1 L6.3 12 L11.5 12 Z" fill="#fff" stroke="#111" stroke-width="1" stroke-linejoin="round"/></g>
<rect x="0" y="30" width="1" height="769" fill="#0063b1"/>
<rect x="1" y="31" width="1" height="767" fill="#fbf6f1"/>
<rect x="1042" y="30" width="1" height="769" fill="#0063b1"/>
<rect x="1" y="797" width="1041" height="1" fill="#f8f4ef"/>
<rect x="0" y="798" width="1043" height="1" fill="#0063b1"/>
</svg>
</body></html>
